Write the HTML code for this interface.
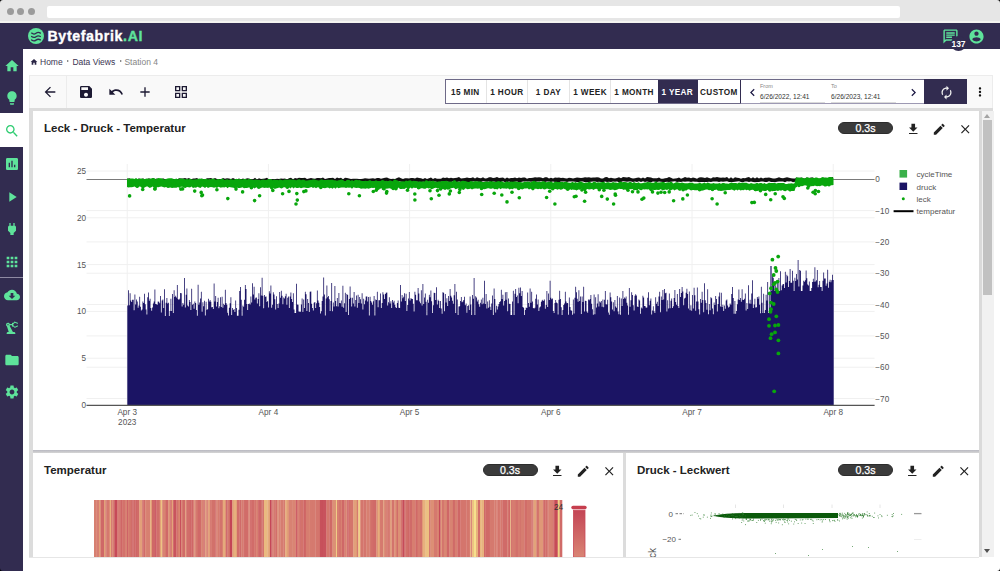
<!DOCTYPE html>
<html><head><meta charset="utf-8">
<style>
*{box-sizing:border-box;margin:0;padding:0}
html,body{width:1000px;height:571px;overflow:hidden;background:#fff;font-family:"Liberation Sans",sans-serif;}
.abs{position:absolute}
svg{display:block}
.chrome{left:0;top:0;width:1000px;height:21px;background:#e6e6e6}
.chromeline{left:0;top:21px;width:1000px;height:2px;background:#f4f4f0}
.dot{width:7px;height:7px;border-radius:50%;background:#9b9b9b;top:7.5px}
.addr{left:47px;top:6px;width:853px;height:12px;background:#fff;border-radius:2px}
.hdr{left:0;top:23px;width:1000px;height:26px;background:#322c50}
.side{left:0;top:49px;width:23px;height:522px;background:#322c50}
.logo{left:47.5px;top:26px;font-weight:bold;font-size:14.2px;letter-spacing:0.62px;color:#fff;line-height:20px;white-space:nowrap;-webkit-text-stroke:0.35px #fff}
.logo span{color:#5ee39b;-webkit-text-stroke:0.35px #5ee39b}
.sico{left:4px;width:15px;height:15px}
.bc{top:57px;font-size:8.5px;line-height:10px;color:#3a3552;white-space:nowrap}
.tb{left:29px;top:75px;width:964px;height:33px;background:#f9f9f9;border:1px solid #ececec;border-bottom:none}
.tbico{width:14px;height:14px;top:85px}
.tgrp{left:445px;top:79px;height:25px;border:1px solid #6e6a88;display:flex;background:#fff}
.tbtn{height:23px;font-size:8.2px;font-weight:bold;color:#222;line-height:23px;text-align:center;border-right:1px solid #e4e4e4;letter-spacing:0.38px}
.gray{left:29px;top:108px;width:950px;height:449px;background:#dcdcdc}
.card{background:#fff}
.ttl{font-size:11.5px;font-weight:bold;color:#222;line-height:14px;white-space:nowrap}
.pill{-webkit-text-stroke:0.25px #fff;width:55px;height:12px;border-radius:6px;background:#3b3b3b;border:1px solid #2c2c2c;color:#fff;font-size:10.6px;line-height:11px;text-align:center}
.cico{width:13px;height:13px}
</style></head><body>
<!-- browser chrome -->
<div class="abs chrome"></div>
<div class="abs chromeline"></div>
<div class="abs dot" style="left:6.5px"></div>
<div class="abs dot" style="left:17px"></div>
<div class="abs dot" style="left:27.5px"></div>
<div class="abs addr"></div>
<!-- header -->
<div class="abs hdr"></div>
<svg class="abs" style="left:26px;top:26px" width="20" height="20" viewBox="0 0 20 20">
<circle cx="10" cy="10" r="8" fill="#5ee39b"/>
<path d="M5.6 7.1q2.2 1.8 4.4 0.2t4.4 -0.2M5.6 10.5q2.2 1.8 4.4 0.2t4.4 -0.2M5.6 13.9q2.2 1.8 4.4 0.2t4.4 -0.2" stroke="#322c50" stroke-width="1.3" fill="none" stroke-linecap="round"/>
</svg>
<div class="abs logo">Bytefabrik<span>.AI</span></div>
<!-- header right icons -->
<svg class="abs" style="left:942px;top:28px" width="17" height="17" viewBox="0 0 24 24"><path fill="#5ee39b" d="M20 2H4c-1.1 0-2 .9-2 2v18l4-4h14c1.1 0 2-.9 2-2V4c0-1.1-.9-2-2-2zm0 14H5.17L4 17.17V4h16v12zM6 12h8v2H6zm0-3h12v2H6zm0-3h12v2H6z"/></svg>
<div class="abs" style="left:950.8px;top:36.3px;width:15px;height:14.5px;border-radius:50%;background:#322c50"></div><div class="abs" style="left:948px;top:37.5px;width:21px;color:#fff;font-size:8.5px;font-weight:bold;line-height:12px;text-align:center">137</div>
<svg class="abs" style="left:967.5px;top:28px" width="17" height="17" viewBox="0 0 24 24"><path fill="#5ee39b" d="M12 2C6.48 2 2 6.48 2 12s4.48 10 10 10 10-4.48 10-10S17.52 2 12 2zm0 3c1.66 0 3 1.34 3 3s-1.34 3-3 3-3-1.34-3-3 1.34-3 3-3zm0 14.2c-2.5 0-4.710-1.28-6-3.22.03-1.99 4-3.08 6-3.08 1.99 0 5.970 1.09 6 3.08-1.29 1.94-3.5 3.22-6 3.22z"/></svg>
<!-- sidebar -->
<div class="abs side"></div>
<div class="abs" style="left:0;top:113px;width:23px;height:34px;background:#fff"></div>
<div class="abs" style="left:0;top:276.5px;width:23px;height:1px;background:#8f8aa3"></div>
<svg class="abs" style="left:3.50px;top:58.00px" width="16" height="16" viewBox="0 0 24 24"><path fill="#5ee39b" d="M10 20v-6h4v6h5v-8h3L12 3 2 12h3v8z"/></svg>
<svg class="abs" style="left:3.50px;top:89.50px" width="16" height="16" viewBox="0 0 24 24"><path fill="#5ee39b" d="M9 21c0 .55.45 1 1 1h4c.55 0 1-.45 1-1v-1H9v1zm3-19C8.14 2 5 5.14 5 9c0 2.38 1.19 4.47 3 5.74V17c0 .55.45 1 1 1h6c.55 0 1-.45 1-1v-2.26c1.81-1.27 3-3.360 3-5.74 0-3.86-3.14-7-7-7z"/></svg>
<svg class="abs" style="left:3.50px;top:123.00px" width="16" height="16" viewBox="0 0 24 24"><path fill="#2ecc71" d="M15.5 14h-.79l-.28-.27C15.41 12.59 16 11.11 16 9.5 16 5.91 13.09 3 9.5 3S3 5.91 3 9.5 5.91 16 9.5 16c1.61 0 3.09-.59 4.23-1.57l.27.28v.79l5 4.99L20.49 19l-4.99-5zm-6 0C7.01 14 5 11.99 5 9.5S7.01 5 9.5 5 14 7.01 14 9.5 11.99 14 9.5 14z"/></svg>
<svg class="abs" style="left:3.50px;top:155.50px" width="16" height="16" viewBox="0 0 24 24"><path fill="#5ee39b" d="M19 3H5c-1.1 0-2 .9-2 2v14c0 1.1.9 2 2 2h14c1.1 0 2-.9 2-2V5c0-1.1-.9-2-2-2zM9 17H7v-7h2v7zm4 0h-2V7h2v10zm4 0h-2v-4h2v4z"/></svg>
<svg class="abs" style="left:3.50px;top:188.50px" width="16" height="16" viewBox="0 0 24 24"><path fill="#5ee39b" d="M8 5v14l11-7z"/></svg>
<svg class="abs" style="left:3.50px;top:220.50px" width="16" height="16" viewBox="0 0 24 24"><path fill="#5ee39b" d="M16.01 7L16 3h-2v4h-4V3H8v4h-.01C7 6.99 6 7.99 6 8.99v5.49L9.5 18v3h5v-3l3.5-3.51v-5.5c0-1-1-2-1.99-1.99z"/></svg>
<svg class="abs" style="left:3.50px;top:253.50px" width="16" height="16" viewBox="0 0 24 24"><path fill="#5ee39b" d="M4 8h4V4H4v4zm6 12h4v-4h-4v4zm-6 0h4v-4H4v4zm0-6h4v-4H4v4zm6 0h4v-4h-4v4zm6-10v4h4V4h-4zm-6 4h4V4h-4v4zm6 6h4v-4h-4v4zm0 6h4v-4h-4v4z"/></svg>
<svg class="abs" style="left:3.50px;top:287.00px" width="16" height="16" viewBox="0 0 24 24"><path fill="#5ee39b" d="M19.35 10.04C18.67 6.59 15.64 4 12 4 9.11 4 6.6 5.64 5.35 8.04 2.34 8.36 0 10.91 0 14c0 3.31 2.69 6 6 6h13c2.76 0 5-2.24 5-5 0-2.64-2.05-4.78-4.65-4.96zM17 13l-5 5-5-5h3V9h4v4h3z"/></svg>
<svg class="abs" style="left:3.50px;top:319.50px" width="16" height="16" viewBox="0 0 24 24"><path fill="#5ee39b" d="M19.93 8.35l-3.6 1.68L14 7.7V6.3l2.33-2.33 3.6 1.68c.38.18.82.01 1-.36.18-.38.01-.82-.36-1l-3.92-1.83c-.38-.18-.83-.1-1.13.2L13.78 4.4c-.18-.24-.46-.4-.78-.4-.55 0-1 .45-1 1v1H8.82C8.4 4.84 7.3 4 6 4 4.34 4 3 5.34 3 7c0 1.1.6 2.05 1.48 2.58L7.08 18H6c-1.1 0-2 .9-2 2v1h13v-1c0-1.1-.9-2-2-2h-1.62L8.41 8.77c.17-.24.31-.49.41-.77H12v1c0 .55.45 1 1 1 .32 0 .6-.16.78-.4l1.74 1.74c.3.3.75.38 1.13.2l3.92-1.83c.38-.18.54-.62.36-1-.18-.37-.62-.54-1-.36zM6 8c-.55 0-1-.45-1-1s.45-1 1-1 1 .45 1 1-.45 1-1 1z"/></svg>
<svg class="abs" style="left:3.50px;top:351.50px" width="16" height="16" viewBox="0 0 24 24"><path fill="#5ee39b" d="M10 4H4c-1.1 0-1.99.9-1.99 2L2 18c0 1.1.9 2 2 2h16c1.1 0 2-.9 2-2V8c0-1.1-.9-2-2-2h-8l-2-2z"/></svg>
<svg class="abs" style="left:3.50px;top:384.00px" width="16" height="16" viewBox="0 0 24 24"><path fill="#5ee39b" d="M19.14 12.94c.04-.3.06-.61.06-.94 0-.32-.02-.64-.07-.94l2.03-1.58c.18-.14.23-.41.12-.61l-1.92-3.32c-.12-.22-.37-.29-.59-.22l-2.39.96c-.5-.38-1.03-.7-1.62-.94l-.36-2.54c-.04-.24-.24-.41-.48-.41h-3.84c-.24 0-.43.17-.47.41l-.36 2.54c-.59.24-1.13.57-1.62.94l-2.39-.96c-.22-.08-.47 0-.59.22L2.74 8.87c-.12.21-.08.47.12.61l2.03 1.58c-.05.3-.09.63-.09.94s.02.64.07.94l-2.03 1.58c-.18.14-.23.41-.12.61l1.92 3.32c.12.22.37.29.59.22l2.390-.96c.5.38 1.03.7 1.62.94l.36 2.54c.05.24.24.41.48.41h3.84c.24 0 .44-.17.47-.41l.36-2.54c.59-.24 1.13-.56 1.62-.94l2.39.96c.22.08.47 0 .59-.22l1.92-3.32c.12-.22.07-.47-.12-.61l-2.01-1.58zM12 15.6c-1.98 0-3.6-1.62-3.6-3.6s1.62-3.6 3.6-3.6 3.6 1.62 3.6 3.6-1.62 3.6-3.6 3.6z"/></svg>

<!-- breadcrumb -->
<svg class="abs" style="left:29.5px;top:57.5px" width="8" height="8" viewBox="0 0 24 24"><path fill="#2a2545" d="M10 20v-6h4v6h5v-8h3L12 3 2 12h3v8z"/></svg>
<div class="abs bc" style="left:40px">Home</div>
<div class="abs" style="left:67px;top:60.3px;width:0;height:0;border-left:2.5px solid #666;border-top:1.7px solid transparent;border-bottom:1.7px solid transparent"></div>
<div class="abs bc" style="left:72.4px">Data Views</div>
<div class="abs" style="left:119.5px;top:60.3px;width:0;height:0;border-left:2.5px solid #666;border-top:1.7px solid transparent;border-bottom:1.7px solid transparent"></div>
<div class="abs bc" style="left:124.4px;color:#858585">Station 4</div>
<!-- toolbar -->
<div class="abs tb"></div>
<div class="abs" style="left:66px;top:76px;width:1px;height:32px;background:#ececec"></div>
<svg class="abs" style="left:41.50px;top:84.00px" width="16" height="16" viewBox="0 0 24 24"><path fill="#1d1a33" d="M20 11H7.83l5.59-5.59L12 4l-8 8 8 8 1.41-1.41L7.83 13H20v-2z"/></svg>
<svg class="abs" style="left:78.00px;top:84.00px" width="16" height="16" viewBox="0 0 24 24"><path fill="#1d1a33" d="M17 3H5c-1.11 0-2 .9-2 2v14c0 1.1.89 2 2 2h14c1.1 0 2-.9 2-2V7l-4-4zm-5 16c-1.66 0-3-1.34-3-3s1.34-3 3-3 3 1.34 3 3-1.34 3-3 3zm3-10H5V5h10v4z"/></svg>
<svg class="abs" style="left:107.70px;top:84.00px" width="16" height="16" viewBox="0 0 24 24"><path fill="#1d1a33" d="M12.5 8c-2.65 0-5.05.99-6.9 2.6L2 7v9h9l-3.62-3.62c1.39-1.16 3.16-1.88 5.12-1.88 3.54 0 6.55 2.31 7.6 5.5l2.37-.78C21.08 11.030 17.15 8 12.5 8z"/></svg>
<svg class="abs" style="left:136.80px;top:84.00px" width="16" height="16" viewBox="0 0 24 24"><path fill="#1d1a33" d="M19 13h-6v6h-2v-6H5v-2h6V5h2v6h6v2z"/></svg>
<svg class="abs" style="left:172.70px;top:84.00px" width="16" height="16" viewBox="0 0 24 24"><path fill="#1d1a33" d="M3 3v8h8V3H3zm6 6H5V5h4v4zm-6 4v8h8v-8H3zm6 6H5v-4h4v4zm4-16v8h8V3h-8zm6 6h-4V5h4v4zm-6 4v8h8v-8h-8zm6 6h-4v-4h4v4z"/></svg>
<div class="abs" style="left:445px;top:79.3px;width:297px;height:25px;border:1.2px solid #6e6a88;background:#fff"></div><div class="abs tbtn" style="left:445.0px;width:41.6px;top:80.3px;border-right:1px solid #e4e4e4;line-height:23px"><span style="position:relative;top:0.8px">15 MIN</span></div><div class="abs tbtn" style="left:486.6px;width:41.6px;top:80.3px;border-right:1px solid #e4e4e4;line-height:23px"><span style="position:relative;top:0.8px">1 HOUR</span></div><div class="abs tbtn" style="left:528.2px;width:41.6px;top:80.3px;border-right:1px solid #e4e4e4;line-height:23px"><span style="position:relative;top:0.8px">1 DAY</span></div><div class="abs tbtn" style="left:569.8px;width:41.6px;top:80.3px;border-right:1px solid #e4e4e4;line-height:23px"><span style="position:relative;top:0.8px">1 WEEK</span></div><div class="abs tbtn" style="left:611.4px;width:46.4px;top:80.3px;border-right:1px solid transparent;line-height:23px"><span style="position:relative;top:0.8px">1 MONTH</span></div><div class="abs tbtn" style="left:657.8px;width:40.0px;top:80.3px;background:#322c50;color:#fff;border-right:1px solid transparent;line-height:23px"><span style="position:relative;top:0.8px">1 YEAR</span></div><div class="abs tbtn" style="left:697.8px;width:43.2px;top:80.3px;border-right:1px solid #322c50;line-height:23px"><span style="position:relative;top:0.8px">CUSTOM</span></div>
<div class="abs" style="left:741px;top:79.3px;width:184px;height:25px;border-top:1.2px solid #6e6a88;border-bottom:1.6px solid #9d99b3;background:#fff"></div>
<svg class="abs" style="left:745.30px;top:84.80px" width="15" height="15" viewBox="0 0 24 24"><path fill="#1d1a45" d="M15.41 7.41L14 6l-6 6 6 6 1.41-1.41L10.83 12z"/></svg>
<svg class="abs" style="left:905.50px;top:84.80px" width="15" height="15" viewBox="0 0 24 24"><path fill="#1d1a45" d="M10 6L8.59 7.41 13.17 12l-4.58 4.59L10 18l6-6z"/></svg>
<div class="abs" style="left:760px;top:83px;font-size:5.5px;color:#888;line-height:6px">From</div>
<div class="abs" style="left:831px;top:83px;font-size:5.5px;color:#888;line-height:6px">To</div>
<div class="abs" style="left:760px;top:91.5px;font-size:6.6px;color:#333;line-height:9px;white-space:nowrap">6/26/2022, 12:41</div>
<div class="abs" style="left:831px;top:91.5px;font-size:6.6px;color:#333;line-height:9px;white-space:nowrap">6/26/2023, 12:41</div>
<div class="abs" style="left:760px;top:101.5px;width:65px;height:1.5px;background:#dadada"></div>
<div class="abs" style="left:831px;top:101.5px;width:65px;height:1.5px;background:#dadada"></div>
<div class="abs" style="left:924.2px;top:79.2px;width:43px;height:24.8px;background:#322c50"></div>
<svg class="abs" style="left:938.50px;top:84.50px" width="15" height="15" viewBox="0 0 24 24"><path fill="#f0f0f0" d="M12 6v3l4-4-4-4v3c-4.42 0-8 3.58-8 8 0 1.57.46 3.03 1.24 4.26L6.7 14.8c-.45-.83-.7-1.79-.7-2.8 0-3.31 2.69-6 6-6zm6.76 1.74L17.3 9.2c.44.84.7 1.79.7 2.8 0 3.31-2.69 6-6 6v-3l-4 4 4 4v-3c4.42 0 8-3.58 8-8 0-1.57-.46-3.03-1.24-4.26z"/></svg>
<svg class="abs" style="left:973.00px;top:85.00px" width="14" height="14" viewBox="0 0 24 24"><path fill="#111" d="M12 8c1.1 0 2-.9 2-2s-.9-2-2-2-2 .9-2 2 .9 2 2 2zm0 2c-1.1 0-2 .9-2 2s.9 2 2 2 2-.9 2-2-.9-2-2-2zm0 6c-1.1 0-2 .9-2 2s.9 2 2 2 2-.9 2-2-.9-2-2-2z"/></svg>

<!-- content gray -->
<div class="abs gray"></div>
<div class="abs card" style="left:33px;top:111px;width:946px;height:338.8px"></div>
<div class="abs" style="left:33px;top:449.8px;width:946px;height:3.2px;background:linear-gradient(#b9b9c1,#d5d5d5)"></div>
<div class="abs card" style="left:33px;top:453px;width:589.8px;height:104px"></div>
<div class="abs card" style="left:626.2px;top:453px;width:352.8px;height:104px"></div>
<div class="abs ttl" style="left:44px;top:121px">Leck - Druck - Temperatur</div>
<div class="abs ttl" style="left:44px;top:463px">Temperatur</div>
<div class="abs ttl" style="left:637px;top:463px">Druck - Leckwert</div>
<div class="abs pill" style="left:838px;top:122px">0.3s</div>
<svg class="abs" style="left:905.75px;top:122.25px" width="14.5" height="14.5" viewBox="0 0 24 24"><path fill="#222" d="M19 9h-4V3H9v6H5l7 7 7-7zM5 18v2h14v-2H5z"/></svg>
<svg class="abs" style="left:931.75px;top:122.25px" width="14.5" height="14.5" viewBox="0 0 24 24"><path fill="#222" d="M3 17.25V21h3.75L17.81 9.94l-3.75-3.75L3 17.25zM20.710 7.04c.39-.39.39-1.02 0-1.41l-2.34-2.34c-.39-.39-1.02-.39-1.41 0l-1.83 1.83 3.75 3.75 1.83-1.83z"/></svg>
<svg class="abs" style="left:957.75px;top:122.25px" width="14.5" height="14.5" viewBox="0 0 24 24"><path fill="#222" d="M19 6.41L17.59 5 12 10.59 6.41 5 5 6.41 10.59 12 5 17.59 6.41 19 12 13.41 17.59 19 19 17.59 13.410 12z"/></svg>
<div class="abs pill" style="left:482.5px;top:464px">0.3s</div>
<svg class="abs" style="left:549.75px;top:464.25px" width="14.5" height="14.5" viewBox="0 0 24 24"><path fill="#222" d="M19 9h-4V3H9v6H5l7 7 7-7zM5 18v2h14v-2H5z"/></svg>
<svg class="abs" style="left:575.75px;top:464.25px" width="14.5" height="14.5" viewBox="0 0 24 24"><path fill="#222" d="M3 17.25V21h3.75L17.81 9.94l-3.75-3.75L3 17.25zM20.710 7.04c.39-.39.39-1.02 0-1.41l-2.34-2.34c-.39-.39-1.02-.39-1.41 0l-1.83 1.83 3.75 3.75 1.83-1.83z"/></svg>
<svg class="abs" style="left:601.75px;top:464.25px" width="14.5" height="14.5" viewBox="0 0 24 24"><path fill="#222" d="M19 6.41L17.59 5 12 10.59 6.41 5 5 6.41 10.59 12 5 17.59 6.41 19 12 13.41 17.59 19 19 17.59 13.410 12z"/></svg>
<div class="abs pill" style="left:838px;top:464px">0.3s</div>
<svg class="abs" style="left:904.75px;top:464.25px" width="14.5" height="14.5" viewBox="0 0 24 24"><path fill="#222" d="M19 9h-4V3H9v6H5l7 7 7-7zM5 18v2h14v-2H5z"/></svg>
<svg class="abs" style="left:930.75px;top:464.25px" width="14.5" height="14.5" viewBox="0 0 24 24"><path fill="#222" d="M3 17.25V21h3.75L17.81 9.94l-3.75-3.75L3 17.25zM20.710 7.04c.39-.39.39-1.02 0-1.41l-2.34-2.34c-.39-.39-1.02-.39-1.41 0l-1.83 1.83 3.75 3.75 1.83-1.83z"/></svg>
<svg class="abs" style="left:956.75px;top:464.25px" width="14.5" height="14.5" viewBox="0 0 24 24"><path fill="#222" d="M19 6.41L17.59 5 12 10.59 6.41 5 5 6.41 10.59 12 5 17.59 6.41 19 12 13.41 17.59 19 19 17.59 13.410 12z"/></svg>
<svg class="abs" style="left:0;top:0" width="1000" height="460" viewBox="0 0 1000 460"><path d="M86.5 358.2H874.6M86.5 311.4H874.6M86.5 264.6H874.6M86.5 217.8H874.6M86.5 171.0H874.6M86.5 210.6H874.6M86.5 241.9H874.6M86.5 273.2H874.6M86.5 304.5H874.6M86.5 335.9H874.6M86.5 367.2H874.6M86.5 398.5H874.6M127.2 164V405M268.4 164V405M409.6 164V405M550.8 164V405M692.0 164V405M833.2 164V405" stroke="#f0f0f0" stroke-width="1" fill="none"/><path d="M86.5 179.5H874.6" stroke="#7a7a7a" stroke-width="1" fill="none"/><path d="M127.30 405V305.4h0.8V405zM128.10 405V290.3h0.8V405zM128.90 405V305.2h0.8V405zM129.70 405V293.2h0.8V405zM130.50 405V300.5h0.8V405zM131.30 405V302.1h0.8V405zM132.10 405V299.7h0.8V405zM132.90 405V299.7h0.8V405zM133.70 405V310.2h0.8V405zM134.50 405V294.4h0.8V405zM135.30 405V304.5h0.8V405zM136.10 405V299.4h0.8V405zM136.90 405V301.6h0.8V405zM137.70 405V307.8h0.8V405zM138.50 405V305.4h0.8V405zM139.30 405V296.7h0.8V405zM140.10 405V306.8h0.8V405zM140.90 405V310.6h0.8V405zM141.70 405V309.5h0.8V405zM142.50 405V301.6h0.8V405zM143.30 405V303.1h0.8V405zM144.10 405V293.7h0.8V405zM144.90 405V304.2h0.8V405zM145.70 405V309.6h0.8V405zM146.50 405V314.4h0.8V405zM147.30 405V297.2h0.8V405zM148.10 405V292.6h0.8V405zM148.90 405V300.7h0.8V405zM149.70 405V298.8h0.8V405zM150.50 405V308h0.8V405zM151.30 405V310.7h0.8V405zM152.10 405V307.4h0.8V405zM152.90 405V303.4h0.8V405zM153.70 405V301.6h0.8V405zM154.50 405V289.5h0.8V405zM155.30 405V304h0.8V405zM156.10 405V304.2h0.8V405zM156.90 405V304.8h0.8V405zM157.70 405V301.5h0.8V405zM158.50 405V301.7h0.8V405zM159.30 405V303.3h0.8V405zM160.10 405V295.9h0.8V405zM160.90 405V312.4h0.8V405zM161.70 405V300.4h0.8V405zM162.50 405V299.4h0.8V405zM163.30 405V308h0.8V405zM164.10 405V289.3h0.8V405zM164.90 405V315.9h0.8V405zM165.70 405V302.8h0.8V405zM166.50 405V298h0.8V405zM167.30 405V303.4h0.8V405zM168.10 405V302.7h0.8V405zM168.90 405V315.9h0.8V405zM169.70 405V310.9h0.8V405zM170.50 405V298.7h0.8V405zM171.30 405V311h0.8V405zM172.10 405V293.9h0.8V405zM172.90 405V312.9h0.8V405zM173.70 405V290.2h0.8V405zM174.50 405V296.9h0.8V405zM175.30 405V295.8h0.8V405zM176.10 405V297.5h0.8V405zM176.90 405V284.9h0.8V405zM177.70 405V299.1h0.8V405zM178.50 405V300h0.8V405zM179.30 405V298.8h0.8V405zM180.10 405V292.9h0.8V405zM180.90 405V293.2h0.8V405zM181.70 405V306.5h0.8V405zM182.50 405V303h0.8V405zM183.30 405V304.7h0.8V405zM184.10 405V277.9h0.8V405zM184.90 405V307.5h0.8V405zM185.70 405V294.8h0.8V405zM186.50 405V288.5h0.8V405zM187.30 405V305.4h0.8V405zM188.10 405V306.4h0.8V405zM188.90 405V300h0.8V405zM189.70 405V302.1h0.8V405zM190.50 405V309.9h0.8V405zM191.30 405V288.7h0.8V405zM192.10 405V304.7h0.8V405zM192.90 405V303.7h0.8V405zM193.70 405V308.7h0.8V405zM194.50 405V301.6h0.8V405zM195.30 405V303h0.8V405zM196.10 405V310h0.8V405zM196.90 405V315.8h0.8V405zM197.70 405V284.7h0.8V405zM198.50 405V304.7h0.8V405zM199.30 405V302.6h0.8V405zM200.10 405V298.4h0.8V405zM200.90 405V291.7h0.8V405zM201.70 405V311.7h0.8V405zM202.50 405V302.3h0.8V405zM203.30 405V306.3h0.8V405zM204.10 405V300.8h0.8V405zM204.90 405V315.5h0.8V405zM205.70 405V301.7h0.8V405zM206.50 405V309.8h0.8V405zM207.30 405V309.3h0.8V405zM208.10 405V298.7h0.8V405zM208.90 405V301.4h0.8V405zM209.70 405V299.9h0.8V405zM210.50 405V301.8h0.8V405zM211.30 405V307.2h0.8V405zM212.10 405V307.1h0.8V405zM212.90 405V309.1h0.8V405zM213.70 405V283.4h0.8V405zM214.50 405V301.5h0.8V405zM215.30 405V296h0.8V405zM216.10 405V306.5h0.8V405zM216.90 405V301.9h0.8V405zM217.70 405V297.7h0.8V405zM218.50 405V308.2h0.8V405zM219.30 405V306.3h0.8V405zM220.10 405V297.3h0.8V405zM220.90 405V307h0.8V405zM221.70 405V296.8h0.8V405zM222.50 405V307.7h0.8V405zM223.30 405V303.8h0.8V405zM224.10 405V305.1h0.8V405zM224.90 405V289.8h0.8V405zM225.70 405V302.9h0.8V405zM226.50 405V304.7h0.8V405zM227.30 405V312.7h0.8V405zM228.10 405V315.6h0.8V405zM228.90 405V307.7h0.8V405zM229.70 405V303.2h0.8V405zM230.50 405V297.2h0.8V405zM231.30 405V315h0.8V405zM232.10 405V308h0.8V405zM232.90 405V310h0.8V405zM233.70 405V309h0.8V405zM234.50 405V312.1h0.8V405zM235.30 405V300.5h0.8V405zM236.10 405V308h0.8V405zM236.90 405V315.7h0.8V405zM237.70 405V315.7h0.8V405zM238.50 405V309.8h0.8V405zM239.30 405V290.9h0.8V405zM240.10 405V286.9h0.8V405zM240.90 405V299.8h0.8V405zM241.70 405V315.7h0.8V405zM242.50 405V305.4h0.8V405zM243.30 405V306.7h0.8V405zM244.10 405V299.7h0.8V405zM244.90 405V285h0.8V405zM245.70 405V289h0.8V405zM246.50 405V304.1h0.8V405zM247.30 405V310h0.8V405zM248.10 405V303.9h0.8V405zM248.90 405V303.4h0.8V405zM249.70 405V304.6h0.8V405zM250.50 405V296.5h0.8V405zM251.30 405V302.4h0.8V405zM252.10 405V283.2h0.8V405zM252.90 405V294.6h0.8V405zM253.70 405V286.7h0.8V405zM254.50 405V299.6h0.8V405zM255.30 405V297.8h0.8V405zM256.10 405V297.5h0.8V405zM256.90 405V303.4h0.8V405zM257.70 405V298.9h0.8V405zM258.50 405V293.3h0.8V405zM259.30 405V306.2h0.8V405zM260.10 405V287.2h0.8V405zM260.90 405V295.4h0.8V405zM261.70 405V277.7h0.8V405zM262.50 405V295.7h0.8V405zM263.30 405V308.2h0.8V405zM264.10 405V295.1h0.8V405zM264.90 405V296.8h0.8V405zM265.70 405V296.5h0.8V405zM266.50 405V301.9h0.8V405zM267.30 405V301.1h0.8V405zM268.10 405V307.4h0.8V405zM268.90 405V291.2h0.8V405zM269.70 405V293.6h0.8V405zM270.50 405V285.6h0.8V405zM271.30 405V307.7h0.8V405zM272.10 405V304.7h0.8V405zM272.90 405V292.2h0.8V405zM273.70 405V294.5h0.8V405zM274.50 405V299.3h0.8V405zM275.30 405V309.6h0.8V405zM276.10 405V296.3h0.8V405zM276.90 405V303.9h0.8V405zM277.70 405V308.1h0.8V405zM278.50 405V303.6h0.8V405zM279.30 405V292h0.8V405zM280.10 405V297.8h0.8V405zM280.90 405V290.7h0.8V405zM281.70 405V295.8h0.8V405zM282.50 405V304.2h0.8V405zM283.30 405V297.6h0.8V405zM284.10 405V298.6h0.8V405zM284.90 405V296.3h0.8V405zM285.70 405V293.8h0.8V405zM286.50 405V304.7h0.8V405zM287.30 405V297.8h0.8V405zM288.10 405V296.5h0.8V405zM288.90 405V308.1h0.8V405zM289.70 405V296.5h0.8V405zM290.50 405V292.4h0.8V405zM291.30 405V299h0.8V405zM292.10 405V302h0.8V405zM292.90 405V293.2h0.8V405zM293.70 405V309.6h0.8V405zM294.50 405V313h0.8V405zM295.30 405V313h0.8V405zM296.10 405V283.8h0.8V405zM296.90 405V304.5h0.8V405zM297.70 405V304.8h0.8V405zM298.50 405V311.6h0.8V405zM299.30 405V311.8h0.8V405zM300.10 405V311.8h0.8V405zM300.90 405V304.4h0.8V405zM301.70 405V298.5h0.8V405zM302.50 405V311.9h0.8V405zM303.30 405V299.6h0.8V405zM304.10 405V308.1h0.8V405zM304.90 405V291.8h0.8V405zM305.70 405V294.3h0.8V405zM306.50 405V311h0.8V405zM307.30 405V299.1h0.8V405zM308.10 405V303.1h0.8V405zM308.90 405V311.9h0.8V405zM309.70 405V291.8h0.8V405zM310.50 405V291.4h0.8V405zM311.30 405V303.7h0.8V405zM312.10 405V308.1h0.8V405zM312.90 405V310.4h0.8V405zM313.70 405V302.7h0.8V405zM314.50 405V301.9h0.8V405zM315.30 405V307.9h0.8V405zM316.10 405V303.3h0.8V405zM316.90 405V290.6h0.8V405zM317.70 405V300.4h0.8V405zM318.50 405V302.8h0.8V405zM319.30 405V307h0.8V405zM320.10 405V313.5h0.8V405zM320.90 405V311.2h0.8V405zM321.70 405V301.1h0.8V405zM322.50 405V296.5h0.8V405zM323.30 405V277.5h0.8V405zM324.10 405V294.6h0.8V405zM324.90 405V315.5h0.8V405zM325.70 405V298.5h0.8V405zM326.50 405V285.5h0.8V405zM327.30 405V297.2h0.8V405zM328.10 405V295.9h0.8V405zM328.90 405V299.2h0.8V405zM329.70 405V311.1h0.8V405zM330.50 405V301.1h0.8V405zM331.30 405V283h0.8V405zM332.10 405V311.2h0.8V405zM332.90 405V302.5h0.8V405zM333.70 405V306.6h0.8V405zM334.50 405V286h0.8V405zM335.30 405V300.9h0.8V405zM336.10 405V306.2h0.8V405zM336.90 405V297.9h0.8V405zM337.70 405V306.5h0.8V405zM338.50 405V292.9h0.8V405zM339.30 405V303h0.8V405zM340.10 405V303.3h0.8V405zM340.90 405V300.6h0.8V405zM341.70 405V306.8h0.8V405zM342.50 405V285.8h0.8V405zM343.30 405V307.8h0.8V405zM344.10 405V303.3h0.8V405zM344.90 405V292.7h0.8V405zM345.70 405V312h0.8V405zM346.50 405V294.1h0.8V405zM347.30 405V295h0.8V405zM348.10 405V314.9h0.8V405zM348.90 405V299.1h0.8V405zM349.70 405V286.6h0.8V405zM350.50 405V297.7h0.8V405zM351.30 405V306.4h0.8V405zM352.10 405V297.7h0.8V405zM352.90 405V303.6h0.8V405zM353.70 405V292h0.8V405zM354.50 405V306.5h0.8V405zM355.30 405V300.1h0.8V405zM356.10 405V295.6h0.8V405zM356.90 405V307.8h0.8V405zM357.70 405V294.7h0.8V405zM358.50 405V303.1h0.8V405zM359.30 405V297.1h0.8V405zM360.10 405V299.2h0.8V405zM360.90 405V303.4h0.8V405zM361.70 405V293.2h0.8V405zM362.50 405V309.5h0.8V405zM363.30 405V298.8h0.8V405zM364.10 405V304.3h0.8V405zM364.90 405V300.6h0.8V405zM365.70 405V296.6h0.8V405zM366.50 405V296.6h0.8V405zM367.30 405V301.6h0.8V405zM368.10 405V297h0.8V405zM368.90 405V315.4h0.8V405zM369.70 405V296.7h0.8V405zM370.50 405V301h0.8V405zM371.30 405V302.6h0.8V405zM372.10 405V304.8h0.8V405zM372.90 405V301.2h0.8V405zM373.70 405V296.1h0.8V405zM374.50 405V315.4h0.8V405zM375.30 405V299.5h0.8V405zM376.10 405V300.1h0.8V405zM376.90 405V291.7h0.8V405zM377.70 405V307.2h0.8V405zM378.50 405V300.2h0.8V405zM379.30 405V300.3h0.8V405zM380.10 405V293.4h0.8V405zM380.90 405V308h0.8V405zM381.70 405V303h0.8V405zM382.50 405V292.2h0.8V405zM383.30 405V294.6h0.8V405zM384.10 405V298.9h0.8V405zM384.90 405V294.1h0.8V405zM385.70 405V292.8h0.8V405zM386.50 405V292.4h0.8V405zM387.30 405V305.6h0.8V405zM388.10 405V302.3h0.8V405zM388.90 405V297.2h0.8V405zM389.70 405V303.4h0.8V405zM390.50 405V301.3h0.8V405zM391.30 405V307.9h0.8V405zM392.10 405V300h0.8V405zM392.90 405V302.5h0.8V405zM393.70 405V300.8h0.8V405zM394.50 405V304.8h0.8V405zM395.30 405V307.3h0.8V405zM396.10 405V307.9h0.8V405zM396.90 405V302.9h0.8V405zM397.70 405V300.5h0.8V405zM398.50 405V307.7h0.8V405zM399.30 405V307.9h0.8V405zM400.10 405V285h0.8V405zM400.90 405V301.5h0.8V405zM401.70 405V295.1h0.8V405zM402.50 405V298.2h0.8V405zM403.30 405V296.8h0.8V405zM404.10 405V293.3h0.8V405zM404.90 405V300.9h0.8V405zM405.70 405V293.7h0.8V405zM406.50 405V310.9h0.8V405zM407.30 405V305.1h0.8V405zM408.10 405V298.5h0.8V405zM408.90 405V291.9h0.8V405zM409.70 405V300.6h0.8V405zM410.50 405V298.2h0.8V405zM411.30 405V298.8h0.8V405zM412.10 405V299h0.8V405zM412.90 405V303.8h0.8V405zM413.70 405V311.4h0.8V405zM414.50 405V291.8h0.8V405zM415.30 405V294.7h0.8V405zM416.10 405V300.2h0.8V405zM416.90 405V300.2h0.8V405zM417.70 405V287.9h0.8V405zM418.50 405V293.5h0.8V405zM419.30 405V301.4h0.8V405zM420.10 405V303.3h0.8V405zM420.90 405V290.3h0.8V405zM421.70 405V305.4h0.8V405zM422.50 405V284h0.8V405zM423.30 405V304.1h0.8V405zM424.10 405V297.6h0.8V405zM424.90 405V293.5h0.8V405zM425.70 405V301.7h0.8V405zM426.50 405V315.2h0.8V405zM427.30 405V299.8h0.8V405zM428.10 405V302.8h0.8V405zM428.90 405V294.8h0.8V405zM429.70 405V297.2h0.8V405zM430.50 405V290.4h0.8V405zM431.30 405V301.2h0.8V405zM432.10 405V312.9h0.8V405zM432.90 405V305.2h0.8V405zM433.70 405V292.7h0.8V405zM434.50 405V293.1h0.8V405zM435.30 405V299.9h0.8V405zM436.10 405V287.3h0.8V405zM436.90 405V304.6h0.8V405zM437.70 405V299.8h0.8V405zM438.50 405V301h0.8V405zM439.30 405V307.9h0.8V405zM440.10 405V300.9h0.8V405zM440.90 405V308.4h0.8V405zM441.70 405V313.7h0.8V405zM442.50 405V292.3h0.8V405zM443.30 405V292.8h0.8V405zM444.10 405V311.2h0.8V405zM444.90 405V293.9h0.8V405zM445.70 405V302.5h0.8V405zM446.50 405V298.3h0.8V405zM447.30 405V306.1h0.8V405zM448.10 405V296h0.8V405zM448.90 405V301.1h0.8V405zM449.70 405V289.1h0.8V405zM450.50 405V295.8h0.8V405zM451.30 405V297.5h0.8V405zM452.10 405V300.8h0.8V405zM452.90 405V303.8h0.8V405zM453.70 405V295.2h0.8V405zM454.50 405V283.9h0.8V405zM455.30 405V313.1h0.8V405zM456.10 405V291.8h0.8V405zM456.90 405V299.5h0.8V405zM457.70 405V315.1h0.8V405zM458.50 405V306.5h0.8V405zM459.30 405V306.2h0.8V405zM460.10 405V301h0.8V405zM460.90 405V297.1h0.8V405zM461.70 405V302.3h0.8V405zM462.50 405V301.5h0.8V405zM463.30 405V300h0.8V405zM464.10 405V296.7h0.8V405zM464.90 405V305.2h0.8V405zM465.70 405V303.4h0.8V405zM466.50 405V312.8h0.8V405zM467.30 405V305.9h0.8V405zM468.10 405V305.2h0.8V405zM468.90 405V309.9h0.8V405zM469.70 405V296.4h0.8V405zM470.50 405V304.5h0.8V405zM471.30 405V315.1h0.8V405zM472.10 405V295.1h0.8V405zM472.90 405V298.7h0.8V405zM473.70 405V278.1h0.8V405zM474.50 405V314.9h0.8V405zM475.30 405V296.2h0.8V405zM476.10 405V297.4h0.8V405zM476.90 405V301.5h0.8V405zM477.70 405V299.8h0.8V405zM478.50 405V304.3h0.8V405zM479.30 405V306.8h0.8V405zM480.10 405V302.7h0.8V405zM480.90 405V299.4h0.8V405zM481.70 405V304.2h0.8V405zM482.50 405V297.7h0.8V405zM483.30 405V303.6h0.8V405zM484.10 405V280.8h0.8V405zM484.90 405V303.9h0.8V405zM485.70 405V294h0.8V405zM486.50 405V308.5h0.8V405zM487.30 405V301.4h0.8V405zM488.10 405V307.7h0.8V405zM488.90 405V300.3h0.8V405zM489.70 405V306.7h0.8V405zM490.50 405V309.9h0.8V405zM491.30 405V303.4h0.8V405zM492.10 405V295.4h0.8V405zM492.90 405V315h0.8V405zM493.70 405V288.6h0.8V405zM494.50 405V299.1h0.8V405zM495.30 405V312.6h0.8V405zM496.10 405V305.8h0.8V405zM496.90 405V309.4h0.8V405zM497.70 405V306.4h0.8V405zM498.50 405V304h0.8V405zM499.30 405V301.9h0.8V405zM500.10 405V301.3h0.8V405zM500.90 405V289.8h0.8V405zM501.70 405V298.9h0.8V405zM502.50 405V294.8h0.8V405zM503.30 405V305.5h0.8V405zM504.10 405V301.1h0.8V405zM504.90 405V292.2h0.8V405zM505.70 405V299.8h0.8V405zM506.50 405V291.9h0.8V405zM507.30 405V311.3h0.8V405zM508.10 405V298.6h0.8V405zM508.90 405V303.7h0.8V405zM509.70 405V304h0.8V405zM510.50 405V315h0.8V405zM511.30 405V315h0.8V405zM512.10 405V301.5h0.8V405zM512.90 405V290.8h0.8V405zM513.70 405V315h0.8V405zM514.50 405V293.8h0.8V405zM515.30 405V289.1h0.8V405zM516.10 405V297h0.8V405zM516.90 405V295.5h0.8V405zM517.70 405V303.2h0.8V405zM518.50 405V287.8h0.8V405zM519.30 405V293.2h0.8V405zM520.10 405V287.5h0.8V405zM520.90 405V296h0.8V405zM521.70 405V291h0.8V405zM522.50 405V307.1h0.8V405zM523.30 405V307.8h0.8V405zM524.10 405V315h0.8V405zM524.90 405V309.9h0.8V405zM525.70 405V307.6h0.8V405zM526.50 405V307.9h0.8V405zM527.30 405V292.6h0.8V405zM528.10 405V303h0.8V405zM528.90 405V306.8h0.8V405zM529.70 405V288.6h0.8V405zM530.50 405V302.7h0.8V405zM531.30 405V291.7h0.8V405zM532.10 405V301.5h0.8V405zM532.90 405V308h0.8V405zM533.70 405V308.4h0.8V405zM534.50 405V307.7h0.8V405zM535.30 405V298.8h0.8V405zM536.10 405V294.4h0.8V405zM536.90 405V304.6h0.8V405zM537.70 405V299.6h0.8V405zM538.50 405V311.1h0.8V405zM539.30 405V307.4h0.8V405zM540.10 405V306.4h0.8V405zM540.90 405V301.8h0.8V405zM541.70 405V300.4h0.8V405zM542.50 405V299.7h0.8V405zM543.30 405V300.9h0.8V405zM544.10 405V299.4h0.8V405zM544.90 405V308.8h0.8V405zM545.70 405V305.1h0.8V405zM546.50 405V291.1h0.8V405zM547.30 405V307.1h0.8V405zM548.10 405V293.5h0.8V405zM548.90 405V299.9h0.8V405zM549.70 405V280.7h0.8V405zM550.50 405V297.7h0.8V405zM551.30 405V299.3h0.8V405zM552.10 405V298.5h0.8V405zM552.90 405V311h0.8V405zM553.70 405V313.1h0.8V405zM554.50 405V303.1h0.8V405zM555.30 405V300.1h0.8V405zM556.10 405V302.6h0.8V405zM556.90 405V303.2h0.8V405zM557.70 405V314.4h0.8V405zM558.50 405V299.7h0.8V405zM559.30 405V290.7h0.8V405zM560.10 405V299h0.8V405zM560.90 405V307.3h0.8V405zM561.70 405V314.9h0.8V405zM562.50 405V309.9h0.8V405zM563.30 405V305h0.8V405zM564.10 405V303.4h0.8V405zM564.90 405V291.7h0.8V405zM565.70 405V301.4h0.8V405zM566.50 405V303.2h0.8V405zM567.30 405V303h0.8V405zM568.10 405V314.8h0.8V405zM568.90 405V297.5h0.8V405zM569.70 405V306.9h0.8V405zM570.50 405V310.2h0.8V405zM571.30 405V310.8h0.8V405zM572.10 405V314.8h0.8V405zM572.90 405V299.6h0.8V405zM573.70 405V313.5h0.8V405zM574.50 405V297.7h0.8V405zM575.30 405V286.7h0.8V405zM576.10 405V292.2h0.8V405zM576.90 405V298.8h0.8V405zM577.70 405V301.7h0.8V405zM578.50 405V290.3h0.8V405zM579.30 405V300.9h0.8V405zM580.10 405V296.4h0.8V405zM580.90 405V313.9h0.8V405zM581.70 405V296.6h0.8V405zM582.50 405V302.1h0.8V405zM583.30 405V286.8h0.8V405zM584.10 405V311.5h0.8V405zM584.90 405V300.8h0.8V405zM585.70 405V301h0.8V405zM586.50 405V311.6h0.8V405zM587.30 405V312.8h0.8V405zM588.10 405V299.5h0.8V405zM588.90 405V300.3h0.8V405zM589.70 405V299h0.8V405zM590.50 405V295.1h0.8V405zM591.30 405V303.8h0.8V405zM592.10 405V309.3h0.8V405zM592.90 405V314.8h0.8V405zM593.70 405V294.5h0.8V405zM594.50 405V314.2h0.8V405zM595.30 405V297.3h0.8V405zM596.10 405V307.4h0.8V405zM596.90 405V303.5h0.8V405zM597.70 405V294.3h0.8V405zM598.50 405V306.4h0.8V405zM599.30 405V301.6h0.8V405zM600.10 405V302.4h0.8V405zM600.90 405V300.9h0.8V405zM601.70 405V306.8h0.8V405zM602.50 405V299.4h0.8V405zM603.30 405V307.3h0.8V405zM604.10 405V299.7h0.8V405zM604.90 405V290.9h0.8V405zM605.70 405V304.3h0.8V405zM606.50 405V304.6h0.8V405zM607.30 405V299.8h0.8V405zM608.10 405V312.5h0.8V405zM608.90 405V314.7h0.8V405zM609.70 405V292.5h0.8V405zM610.50 405V297.2h0.8V405zM611.30 405V301.4h0.8V405zM612.10 405V309.6h0.8V405zM612.90 405V302.3h0.8V405zM613.70 405V311.2h0.8V405zM614.50 405V300h0.8V405zM615.30 405V306.4h0.8V405zM616.10 405V307.7h0.8V405zM616.90 405V296.1h0.8V405zM617.70 405V311.4h0.8V405zM618.50 405V314.2h0.8V405zM619.30 405V297.4h0.8V405zM620.10 405V314.7h0.8V405zM620.90 405V298.5h0.8V405zM621.70 405V305.9h0.8V405zM622.50 405V291.1h0.8V405zM623.30 405V299.1h0.8V405zM624.10 405V297.5h0.8V405zM624.90 405V298.6h0.8V405zM625.70 405V296.5h0.8V405zM626.50 405V302.7h0.8V405zM627.30 405V305.6h0.8V405zM628.10 405V314.7h0.8V405zM628.90 405V287.9h0.8V405zM629.70 405V306.7h0.8V405zM630.50 405V300.2h0.8V405zM631.30 405V292.2h0.8V405zM632.10 405V295h0.8V405zM632.90 405V305.3h0.8V405zM633.70 405V310.5h0.8V405zM634.50 405V295.8h0.8V405zM635.30 405V294.2h0.8V405zM636.10 405V295.5h0.8V405zM636.90 405V306.5h0.8V405zM637.70 405V306.9h0.8V405zM638.50 405V299.6h0.8V405zM639.30 405V300.4h0.8V405zM640.10 405V313.7h0.8V405zM640.90 405V307.4h0.8V405zM641.70 405V308.6h0.8V405zM642.50 405V295.8h0.8V405zM643.30 405V297.6h0.8V405zM644.10 405V306.1h0.8V405zM644.90 405V306.3h0.8V405zM645.70 405V307.7h0.8V405zM646.50 405V307.5h0.8V405zM647.30 405V297.7h0.8V405zM648.10 405V292.2h0.8V405zM648.90 405V305.2h0.8V405zM649.70 405V300.8h0.8V405zM650.50 405V298.6h0.8V405zM651.30 405V314.6h0.8V405zM652.10 405V310.5h0.8V405zM652.90 405V306.3h0.8V405zM653.70 405V311.2h0.8V405zM654.50 405V312.9h0.8V405zM655.30 405V297.2h0.8V405zM656.10 405V303.8h0.8V405zM656.90 405V301.8h0.8V405zM657.70 405V305.9h0.8V405zM658.50 405V296.5h0.8V405zM659.30 405V291.8h0.8V405zM660.10 405V312.3h0.8V405zM660.90 405V296.5h0.8V405zM661.70 405V300.1h0.8V405zM662.50 405V289.9h0.8V405zM663.30 405V299.5h0.8V405zM664.10 405V288.9h0.8V405zM664.90 405V293.2h0.8V405zM665.70 405V292.7h0.8V405zM666.50 405V311.5h0.8V405zM667.30 405V300.2h0.8V405zM668.10 405V308.5h0.8V405zM668.90 405V293.5h0.8V405zM669.70 405V308.2h0.8V405zM670.50 405V300.8h0.8V405zM671.30 405V298.5h0.8V405zM672.10 405V308.1h0.8V405zM672.90 405V306.2h0.8V405zM673.70 405V298h0.8V405zM674.50 405V290.1h0.8V405zM675.30 405V301.9h0.8V405zM676.10 405V304.8h0.8V405zM676.90 405V293.9h0.8V405zM677.70 405V305.9h0.8V405zM678.50 405V308h0.8V405zM679.30 405V288.9h0.8V405zM680.10 405V297.1h0.8V405zM680.90 405V293.1h0.8V405zM681.70 405V287h0.8V405zM682.50 405V291.6h0.8V405zM683.30 405V305.3h0.8V405zM684.10 405V298.6h0.8V405zM684.90 405V297.8h0.8V405zM685.70 405V292.7h0.8V405zM686.50 405V288.7h0.8V405zM687.30 405V294.1h0.8V405zM688.10 405V308.5h0.8V405zM688.90 405V291.6h0.8V405zM689.70 405V310.2h0.8V405zM690.50 405V305.3h0.8V405zM691.30 405V310.7h0.8V405zM692.10 405V295h0.8V405zM692.90 405V308.4h0.8V405zM693.70 405V287.7h0.8V405zM694.50 405V295.3h0.8V405zM695.30 405V310.8h0.8V405zM696.10 405V301.5h0.8V405zM696.90 405V287.6h0.8V405zM697.70 405V301.4h0.8V405zM698.50 405V309.3h0.8V405zM699.30 405V314.4h0.8V405zM700.10 405V299.1h0.8V405zM700.90 405V302.7h0.8V405zM701.70 405V291.8h0.8V405zM702.50 405V300.1h0.8V405zM703.30 405V312.2h0.8V405zM704.10 405V283.3h0.8V405zM704.90 405V300.3h0.8V405zM705.70 405V303.1h0.8V405zM706.50 405V309.7h0.8V405zM707.30 405V289.2h0.8V405zM708.10 405V314.3h0.8V405zM708.90 405V303.9h0.8V405zM709.70 405V310.2h0.8V405zM710.50 405V297.3h0.8V405zM711.30 405V298.2h0.8V405zM712.10 405V308.5h0.8V405zM712.90 405V314.2h0.8V405zM713.70 405V302.5h0.8V405zM714.50 405V304.9h0.8V405zM715.30 405V295.9h0.8V405zM716.10 405V299.1h0.8V405zM716.90 405V311.5h0.8V405zM717.70 405V303.9h0.8V405zM718.50 405V296.4h0.8V405zM719.30 405V292.5h0.8V405zM720.10 405V306.4h0.8V405zM720.90 405V292.8h0.8V405zM721.70 405V307.1h0.8V405zM722.50 405V304.8h0.8V405zM723.30 405V311h0.8V405zM724.10 405V305.6h0.8V405zM724.90 405V308.7h0.8V405zM725.70 405V300.6h0.8V405zM726.50 405V299.6h0.8V405zM727.30 405V305.4h0.8V405zM728.10 405V307.4h0.8V405zM728.90 405V306.7h0.8V405zM729.70 405V303.6h0.8V405zM730.50 405V304.7h0.8V405zM731.30 405V294.1h0.8V405zM732.10 405V287h0.8V405zM732.90 405V298h0.8V405zM733.70 405V313.8h0.8V405zM734.50 405V301h0.8V405zM735.30 405V313.7h0.8V405zM736.10 405V310.9h0.8V405zM736.90 405V304.2h0.8V405zM737.70 405V299.4h0.8V405zM738.50 405V289.6h0.8V405zM739.30 405V300.1h0.8V405zM740.10 405V298h0.8V405zM740.90 405V301.8h0.8V405zM741.70 405V289.2h0.8V405zM742.50 405V299.7h0.8V405zM743.30 405V300.1h0.8V405zM744.10 405V298.8h0.8V405zM744.90 405V293.6h0.8V405zM745.70 405V310.6h0.8V405zM746.50 405V303.1h0.8V405zM747.30 405V309h0.8V405zM748.10 405V285.2h0.8V405zM748.90 405V303.6h0.8V405zM749.70 405V299.7h0.8V405zM750.50 405V303.7h0.8V405zM751.30 405V293.4h0.8V405zM752.10 405V280.3h0.8V405zM752.90 405V308h0.8V405zM753.70 405V304.5h0.8V405zM754.50 405V298.7h0.8V405zM755.30 405V307.6h0.8V405zM756.10 405V307.2h0.8V405zM756.90 405V297.1h0.8V405zM757.70 405V298.7h0.8V405zM758.50 405V296.5h0.8V405zM759.30 405V304.8h0.8V405zM760.10 405V313.2h0.8V405zM760.90 405V286.7h0.8V405zM761.70 405V302.7h0.8V405zM762.50 405V313.1h0.8V405zM763.30 405V293.8h0.8V405zM764.10 405V313.1h0.8V405zM764.90 405V310.1h0.8V405zM765.70 405V294.7h0.8V405zM766.50 405V300.5h0.8V405zM767.30 405V281.9h0.8V405zM768.10 405V313h0.8V405zM768.90 405V293.9h0.8V405zM769.70 405V307.7h0.8V405zM770.50 405V278.5h0.8V405zM771.30 405V291h0.8V405zM772.10 405V274.9h0.8V405zM772.90 405V277.8h0.8V405zM773.70 405V282h0.8V405zM774.50 405V291h0.8V405zM775.30 405V285.2h0.8V405zM776.10 405V288.5h0.8V405zM776.90 405V281.9h0.8V405zM777.70 405V291h0.8V405zM778.50 405V278.1h0.8V405zM779.30 405V291h0.8V405zM780.10 405V271.2h0.8V405zM780.90 405V290.2h0.8V405zM781.70 405V285.6h0.8V405zM782.50 405V284.2h0.8V405zM783.30 405V283.9h0.8V405zM784.10 405V287.9h0.8V405zM784.90 405V271.7h0.8V405zM785.70 405V282.4h0.8V405zM786.50 405V274.8h0.8V405zM787.30 405V276.3h0.8V405zM788.10 405V286.9h0.8V405zM788.90 405V281.1h0.8V405zM789.70 405V269h0.8V405zM790.50 405V282.8h0.8V405zM791.30 405V282.8h0.8V405zM792.10 405V270.7h0.8V405zM792.90 405V280.7h0.8V405zM793.70 405V291h0.8V405zM794.50 405V277.8h0.8V405zM795.30 405V281h0.8V405zM796.10 405V274.1h0.8V405zM796.90 405V279.4h0.8V405zM797.70 405V260h0.8V405zM798.50 405V286.6h0.8V405zM799.30 405V270h0.8V405zM800.10 405V270.7h0.8V405zM800.90 405V291h0.8V405zM801.70 405V291h0.8V405zM802.50 405V285.6h0.8V405zM803.30 405V280.8h0.8V405zM804.10 405V281.7h0.8V405zM804.90 405V280.2h0.8V405zM805.70 405V270.5h0.8V405zM806.50 405V278.2h0.8V405zM807.30 405V284.4h0.8V405zM808.10 405V285.6h0.8V405zM808.90 405V281.5h0.8V405zM809.70 405V291h0.8V405zM810.50 405V291h0.8V405zM811.30 405V288h0.8V405zM812.10 405V282.1h0.8V405zM812.90 405V278.7h0.8V405zM813.70 405V281.7h0.8V405zM814.50 405V267.2h0.8V405zM815.30 405V281.4h0.8V405zM816.10 405V280.3h0.8V405zM816.90 405V270.1h0.8V405zM817.70 405V287.3h0.8V405zM818.50 405V284.8h0.8V405zM819.30 405V281h0.8V405zM820.10 405V286.9h0.8V405zM820.90 405V287.1h0.8V405zM821.70 405V291h0.8V405zM822.50 405V280.7h0.8V405zM823.30 405V272.4h0.8V405zM824.10 405V278.4h0.8V405zM824.90 405V278.5h0.8V405zM825.70 405V285.7h0.8V405zM826.50 405V283.6h0.8V405zM827.30 405V269.7h0.8V405zM828.10 405V287.7h0.8V405zM828.90 405V281.7h0.8V405zM829.70 405V279.8h0.8V405zM830.50 405V282.3h0.8V405zM831.30 405V280.2h0.8V405zM832.10 405V274.8h0.8V405zM832.90 405V280.1h0.8V405zM770.4 300V266h1.2V300z" fill="#1b1464"/><path d="M86.5 405.4H874.6" stroke="#555" stroke-width="1.2" fill="none"/><polygon points="127,179.7 129,178.1 131,179.5 133,179.2 135,179.7 137,179.4 139,178.2 141,179.4 143,178.2 145,179.5 147,178.9 149,178.2 151,179.2 153,178 155,179 157,178.4 159,179 161,179.4 163,178.3 165,179.2 167,179.2 169,179.4 171,179.4 173,178.8 175,179.5 177,179.5 179,178.2 181,178.6 183,178.6 185,177.9 187,178.7 189,178.1 191,179.4 193,178.5 195,178.6 197,178 199,179.6 201,178.8 203,178.9 205,179.6 207,178.2 209,178.3 211,177.9 213,179.1 215,177.9 217,178.9 219,179.1 221,179.4 223,177.9 225,178.7 227,178.3 229,178.5 231,178.9 233,178.1 235,179.1 237,179.3 239,178.5 241,179.3 243,178.5 245,179.2 247,178.2 249,178.5 251,179.2 253,179.2 255,177.8 257,179.5 259,178.2 261,178.9 263,178.7 265,178.5 267,177.7 269,179.4 271,179.4 273,179.1 275,179.3 277,178.8 279,178.9 281,178.6 283,178.8 285,178.6 287,179.4 289,178.2 291,177.8 293,179.3 295,178.1 297,178.6 299,177.8 301,178.1 303,178.1 305,177.7 307,179.1 309,178.6 311,177.9 313,178.4 315,178.7 317,178.1 319,177.9 321,178.2 323,177.6 325,179.1 327,178.5 329,178 331,178 333,177.8 335,179.1 337,177.6 339,178.3 341,177.7 343,179.2 345,177.7 347,178.1 349,178.6 351,178.9 353,178.8 355,178.8 357,178.8 359,179.1 361,179 363,178.8 365,178.3 367,178.4 369,178.8 371,178.5 373,178.2 375,178.7 377,178.1 379,178.1 381,178.8 383,178.3 385,177.7 387,177.6 389,178.4 391,179 393,178.8 395,179 397,178.1 399,177.3 401,178.3 403,178.9 405,178.3 407,178.2 409,178.5 411,177.9 413,177.9 415,178.5 417,177.4 419,178 421,178.3 423,179 425,178 427,179 429,178.2 431,177.5 433,179 435,178.1 437,178.8 439,178.7 441,178.8 443,177.5 445,178.1 447,177.5 449,178.3 451,177.8 453,178.3 455,177.9 457,177.7 459,177.1 461,178.6 463,178.3 465,178 467,177.6 469,178 471,178.1 473,177.3 475,178.4 477,177.2 479,178 481,178.2 483,177.2 485,178.4 487,178.3 489,177.3 491,177.2 493,178.1 495,177.8 497,177.1 499,178.1 501,177.8 503,177.4 505,178.7 507,177.6 509,178.5 511,178.1 513,177.9 515,177.4 517,178.3 519,177.6 521,177.9 523,177.4 525,177.6 527,178.7 529,178 531,178 533,177.7 535,177.2 537,177.6 539,177.3 541,177.4 543,178.2 545,177.3 547,177.2 549,178.5 551,177.8 553,178.4 555,177.6 557,177.7 559,177.4 561,177.9 563,177.8 565,178.3 567,178.6 569,177.7 571,178.1 573,178.6 575,177.9 577,177.5 579,177.7 581,178 583,177.7 585,177.3 587,177.6 589,177.2 591,177.7 593,177.5 595,177.6 597,177.2 599,177.5 601,178.6 603,178.6 605,177.2 607,177.1 609,178.2 611,177.7 613,178.3 615,178.5 617,178.1 619,177.2 621,178.3 623,177.1 625,177.3 627,177.5 629,177.1 631,178.1 633,178.5 635,178.3 637,177.8 639,177.6 641,178.5 643,177.5 645,178.5 647,177.1 649,177.2 651,177.4 653,178.3 655,178.3 657,178.3 659,177.5 661,178.7 663,178.7 665,178.3 667,178.1 669,177.1 671,177.8 673,178.7 675,178.4 677,178.3 679,177.5 681,178.7 683,178 685,177.1 687,177.7 689,177.6 691,178.3 693,177.4 695,177.9 697,178.7 699,177.5 701,177.3 703,177.6 705,178 707,177.3 709,178.1 711,178.4 713,177.2 715,177.6 717,177.1 719,177.4 721,177.8 723,177.6 725,177.7 727,177.1 729,178.8 731,177.2 733,178.8 735,177.2 737,177.8 739,178 741,178.7 743,178.1 745,178.2 747,177.4 749,177 751,178.5 753,177.3 755,178.5 757,177.3 759,178.5 761,177.6 763,178.5 765,177.7 767,177.7 769,177.4 771,178 773,178.5 775,178.6 777,177.9 779,177.3 781,178 783,178.2 785,177.8 787,177.2 789,177.8 791,178.3 793,178.5 795,178.4 797,177.5 799,177.9 801,177.6 803,178.2 805,178.6 807,177.5 809,178 811,177.4 813,177.6 815,178.7 817,178.6 819,178.7 821,178.5 823,178.2 825,177.5 827,178.7 829,178.2 831,177.6 833,177.1 833,181.5 831,182.2 829,181.6 827,181.8 825,181.9 823,181.9 821,181.4 819,181.9 817,182.3 815,182.2 813,181.8 811,181.4 809,181.6 807,181.7 805,181.5 803,182.1 801,181.7 799,181.7 797,182 795,181.7 793,182.2 791,181.3 789,181.5 787,181.3 785,182.3 783,181.5 781,181.4 779,181.6 777,181.8 775,182.2 773,182 771,181.9 769,181.3 767,182.1 765,181.9 763,181.6 761,181.5 759,182 757,182.1 755,182.2 753,181.9 751,181.6 749,182.1 747,181.4 745,181.6 743,182.2 741,181.9 739,181.3 737,181.5 735,181.8 733,181.9 731,182 729,182.1 727,181.3 725,181.5 723,181.8 721,181.4 719,182 717,181.6 715,181.5 713,181.6 711,182.1 709,181.8 707,182 705,182.1 703,182.1 701,181.9 699,182.2 697,181.7 695,181.7 693,181.5 691,182 689,181.4 687,181.5 685,181.7 683,181.5 681,181.9 679,181.8 677,182.1 675,181.3 673,181.4 671,181.8 669,182 667,181.8 665,182.1 663,182 661,181.7 659,181.4 657,182.1 655,181.7 653,181.4 651,182.2 649,182.1 647,181.5 645,181.9 643,181.3 641,182.1 639,181.3 637,182 635,181.6 633,181.9 631,181.5 629,181.6 627,181.7 625,181.5 623,181.3 621,182 619,182.2 617,181.5 615,181.7 613,181.5 611,182 609,181.7 607,182 605,181.6 603,182.2 601,182.1 599,181.7 597,182 595,181.5 593,181.4 591,181.8 589,181.9 587,182 585,182.2 583,181.4 581,181.6 579,182 577,182.1 575,181.8 573,181.4 571,181.5 569,181.5 567,181.9 565,181.6 563,181.4 561,181.5 559,182.3 557,182.3 555,182 553,181.5 551,182.1 549,181.4 547,181.6 545,182 543,181.6 541,181.3 539,181.6 537,181.5 535,182.1 533,181.4 531,181.7 529,181.4 527,181.6 525,181.5 523,181.5 521,182.1 519,182.2 517,181.5 515,181.7 513,182.2 511,182.3 509,181.6 507,182.2 505,182.2 503,181.3 501,181.9 499,182.3 497,182.2 495,181.7 493,181.6 491,182.2 489,181.6 487,181.7 485,181.6 483,181.3 481,182.1 479,182.1 477,181.5 475,181.4 473,181.5 471,181.7 469,182.3 467,181.9 465,181.9 463,181.5 461,181.9 459,181.6 457,182 455,182.1 453,181.3 451,182.3 449,181.9 447,181.5 445,181.8 443,181.6 441,181.7 439,182.3 437,182 435,181.4 433,182.1 431,181.6 429,182.1 427,181.6 425,181.9 423,181.8 421,182.2 419,181.9 417,181.7 415,181.8 413,182.2 411,181.9 409,181.7 407,181.8 405,182.3 403,182.1 401,181.8 399,181.3 397,182.2 395,181.5 393,182.1 391,181.6 389,181.4 387,181.9 385,181.6 383,181.7 381,182.1 379,181.6 377,181.9 375,181.6 373,181.8 371,181.7 369,182.2 367,181.7 365,182.3 363,181.9 361,181.3 359,181.4 357,182 355,181.8 353,182 351,181.8 349,182.1 347,182 345,181.6 343,182 341,181.5 339,182 337,181.7 335,181.7 333,181.4 331,182.1 329,182.3 327,181.8 325,181.5 323,181.7 321,181.9 319,181.8 317,181.5 315,181.8 313,181.8 311,182 309,182 307,181.9 305,181.8 303,181.5 301,181.7 299,181.4 297,181.4 295,181.8 293,181.8 291,181.9 289,181.9 287,181.6 285,181.7 283,181.6 281,182.2 279,181.6 277,181.6 275,181.3 273,182.2 271,181.9 269,182.1 267,181.4 265,181.8 263,181.4 261,181.7 259,181.7 257,182.2 255,181.8 253,182.1 251,182.2 249,182.3 247,181.6 245,181.6 243,182.2 241,181.8 239,181.7 237,182.2 235,181.5 233,181.9 231,182.2 229,181.4 227,181.4 225,181.8 223,181.4 221,182 219,181.4 217,181.8 215,181.9 213,181.5 211,181.4 209,182.1 207,181.4 205,181.5 203,181.3 201,181.8 199,181.8 197,182.2 195,182.1 193,182 191,182.2 189,182 187,181.8 185,181.8 183,181.9 181,181.5 179,182.1 177,181.6 175,181.8 173,181.3 171,182.2 169,181.6 167,181.4 165,181.7 163,181.4 161,181.9 159,182 157,181.5 155,181.8 153,181.4 151,181.5 149,182.1 147,181.4 145,181.5 143,181.7 141,181.8 139,181.3 137,181.6 135,181.3 133,181.6 131,181.4 129,181.6 127,182.2" fill="#111"/><polygon points="127,178.1 128.5,179 130,178.6 131.5,178.6 133,178.4 134.5,179 136,177.9 137.5,179 139,178.9 140.5,178.5 142,178.5 143.5,178.9 145,179.1 146.5,178.4 148,178.7 149.5,178.7 151,178.5 152.5,178.3 154,178 155.5,179.2 157,178.8 158.5,178 160,178.3 161.5,178.3 163,179.1 164.5,179.4 166,179.1 167.5,178.5 169,178.2 170.5,178.3 172,178.2 173.5,179.3 175,179 176.5,178.6 178,179.4 179.5,178.5 181,178.6 182.5,178.7 184,178.8 185.5,179.5 187,178.7 188.5,179.4 190,178.5 191.5,179.5 193,179.5 194.5,179.4 196,179.3 197.5,179.2 199,178.5 200.5,178.8 202,178.4 203.5,179.3 205,179.1 206.5,178.7 208,179.6 209.5,178.9 211,179.2 212.5,178.7 214,178.6 215.5,179.8 217,179.6 218.5,179.1 220,179.7 221.5,179.3 223,179.4 224.5,180 226,179.5 227.5,179.3 229,179.9 230.5,179.1 232,179.6 233.5,179.7 235,179.3 236.5,178.7 238,179.3 239.5,178.9 241,179.2 242.5,179.6 244,179 245.5,178.8 247,179.7 248.5,179.1 250,179.3 251.5,179.4 253,180.1 254.5,179.8 256,179.6 257.5,179.9 259,179.8 260.5,180.3 262,179.7 263.5,179.5 265,180.1 266.5,179.9 268,179.3 269.5,179.1 271,179.1 272.5,180.3 274,179.6 275.5,179.9 277,179.8 278.5,180.3 280,179.2 281.5,180.1 283,180.3 284.5,179.5 286,180 287.5,179.7 289,179.6 290.5,179.5 292,179.7 293.5,179.4 295,180.1 296.5,180.3 298,179.4 299.5,179.3 301,180.2 302.5,179.7 304,179.7 305.5,180.6 307,180.6 308.5,180.2 310,179.9 311.5,180.1 313,179.5 314.5,179.4 316,179.9 317.5,180.3 319,180.6 320.5,179.7 322,179.7 323.5,180.1 325,180.1 326.5,180 328,179.8 329.5,179.9 331,179.8 332.5,179.8 334,180.3 335.5,180.2 337,180.8 338.5,180.3 340,179.9 341.5,179.6 343,180 344.5,181 346,181 347.5,180.3 349,179.8 350.5,180.9 352,180.1 353.5,180.9 355,180 356.5,179.8 358,180.3 359.5,180 361,180.7 362.5,181 364,181.1 365.5,180.7 367,181.1 368.5,180.7 370,179.9 371.5,181 373,180.9 374.5,181 376,180.2 377.5,180.9 379,181 380.5,181.1 382,180.1 383.5,180.3 385,181 386.5,180.7 388,181.2 389.5,180.6 391,180.6 392.5,181.2 394,181 395.5,180.3 397,180.3 398.5,181.1 400,181.4 401.5,181.5 403,181.3 404.5,181.4 406,180.6 407.5,181.1 409,180.6 410.5,180.2 412,181.3 413.5,180.7 415,180.9 416.5,181.1 418,181.7 419.5,181.3 421,181.5 422.5,181.5 424,181.5 425.5,181.5 427,181.1 428.5,181.3 430,180.5 431.5,181.5 433,180.6 434.5,181.4 436,181.5 437.5,181.8 439,181.3 440.5,181.4 442,180.9 443.5,181.1 445,181 446.5,180.7 448,181.4 449.5,181.4 451,181.4 452.5,181.4 454,180.6 455.5,181.2 457,181.7 458.5,181.5 460,181.8 461.5,180.9 463,180.8 464.5,181.1 466,181.2 467.5,181.7 469,182.1 470.5,181 472,181.3 473.5,181.8 475,181.1 476.5,181.2 478,181.5 479.5,181.3 481,181.4 482.5,181.9 484,181.9 485.5,181.6 487,181.5 488.5,182 490,181 491.5,181.6 493,181.2 494.5,182.1 496,181.7 497.5,181.2 499,181.1 500.5,181.8 502,181.2 503.5,182.2 505,182.2 506.5,181.3 508,181.8 509.5,181.9 511,181.5 512.5,181.8 514,181.4 515.5,181.5 517,181.7 518.5,182 520,182 521.5,182.2 523,182.4 524.5,181.5 526,182.1 527.5,181.4 529,181.7 530.5,182.3 532,181.5 533.5,182.1 535,182 536.5,181.6 538,182 539.5,181.5 541,182.1 542.5,181.3 544,181.3 545.5,182.1 547,182.2 548.5,181.6 550,182 551.5,181.4 553,182.7 554.5,182.1 556,181.6 557.5,182.1 559,182.1 560.5,182 562,181.8 563.5,182.2 565,181.8 566.5,181.7 568,182.6 569.5,182.7 571,182.7 572.5,181.8 574,182.8 575.5,181.9 577,182.8 578.5,182.3 580,181.5 581.5,181.7 583,182.4 584.5,182.9 586,182.5 587.5,182.5 589,181.7 590.5,182.2 592,182.9 593.5,181.8 595,181.8 596.5,182.7 598,182.3 599.5,182.4 601,182.2 602.5,181.9 604,181.8 605.5,183 607,182.3 608.5,182.3 610,182.7 611.5,182.7 613,182 614.5,182.5 616,182.5 617.5,183.1 619,182.2 620.5,181.9 622,182.3 623.5,181.9 625,182.1 626.5,182.2 628,182.8 629.5,182 631,181.9 632.5,183.1 634,182.1 635.5,182.7 637,182.9 638.5,182.3 640,183.2 641.5,183.2 643,182.9 644.5,182.5 646,182.5 647.5,182.1 649,182.2 650.5,182.2 652,182.8 653.5,182.8 655,183.1 656.5,183.3 658,182.4 659.5,182.5 661,182.3 662.5,182.1 664,182.1 665.5,183 667,182.4 668.5,182.2 670,182.8 671.5,182.6 673,183.4 674.5,183.1 676,182.3 677.5,182.2 679,182.7 680.5,183.1 682,182.6 683.5,183.1 685,183.2 686.5,183.3 688,183.2 689.5,182.8 691,182.8 692.5,182.8 694,183.6 695.5,183.5 697,183.5 698.5,183.2 700,182.7 701.5,183.4 703,183.2 704.5,182.5 706,183.5 707.5,182.5 709,183 710.5,183.6 712,183.5 713.5,183.1 715,183.5 716.5,183.5 718,183.5 719.5,183.1 721,183.8 722.5,183.1 724,183 725.5,183.5 727,183.6 728.5,183.8 730,183.1 731.5,182.6 733,183.1 734.5,183.1 736,182.9 737.5,183.6 739,182.6 740.5,183.1 742,182.8 743.5,182.8 745,182.7 746.5,182.7 748,183.4 749.5,183.7 751,183.1 752.5,183.5 754,183.8 755.5,183.6 757,182.7 758.5,183.4 760,183 761.5,183 763,183.8 764.5,182.9 766,184 767.5,183.6 769,182.8 770.5,183.1 772,183 773.5,182.9 775,183 776.5,183.4 778,183 779.5,183 781,182.9 782.5,182.9 784,182.9 785.5,183.9 787,183.9 788.5,183.6 790,183.6 791.5,183.3 793,183.7 794.5,183.2 796,177.1 797.5,177.8 799,177.5 800.5,177.9 802,177.2 803.5,178.4 805,178.4 806.5,177.3 808,177.6 809.5,177.9 811,177.9 812.5,177.5 814,178.3 815.5,177.4 817,177.5 818.5,178.2 820,178.3 821.5,178.1 823,177.1 824.5,178.1 826,177.5 827.5,177.8 829,177.1 830.5,177 832,177.2 833.5,177.7 833.5,185 832,185.3 830.5,185.3 829,185.8 827.5,185.8 826,186.4 824.5,186.4 823,185.6 821.5,185.4 820,186.3 818.5,186.1 817,186.3 815.5,185.7 814,185.4 812.5,185.5 811,186.4 809.5,185.3 808,185.7 806.5,185.7 805,185.2 803.5,185.8 802,186.3 800.5,186 799,186.3 797.5,185.1 796,186.3 794.5,191 793,191.1 791.5,191 790,191.3 788.5,190.2 787,190.2 785.5,191.2 784,191.1 782.5,190 781,190.7 779.5,190.3 778,191 776.5,190.5 775,191.1 773.5,191 772,191.2 770.5,190 769,190.8 767.5,190 766,190.9 764.5,191 763,190.7 761.5,190.7 760,191.1 758.5,190.5 757,190.9 755.5,191.2 754,190 752.5,189.8 751,189.9 749.5,190.8 748,189.7 746.5,190.2 745,189.6 743.5,190.3 742,190.1 740.5,190.6 739,189.6 737.5,190.5 736,189.6 734.5,190.8 733,189.9 731.5,189.6 730,189.9 728.5,190.1 727,189.9 725.5,190.6 724,190.5 722.5,190.7 721,190.9 719.5,190.8 718,190.8 716.5,189.6 715,190 713.5,190 712,190.2 710.5,190.1 709,190.2 707.5,189.5 706,189.5 704.5,190.1 703,190.6 701.5,190.8 700,189.5 698.5,189.9 697,190.2 695.5,190.3 694,190.1 692.5,190 691,190.5 689.5,189.4 688,189.3 686.5,190.4 685,190.4 683.5,189.9 682,189.2 680.5,190.7 679,190.7 677.5,189.2 676,189.5 674.5,190.5 673,189.3 671.5,190 670,190.5 668.5,189.2 667,189.9 665.5,189.6 664,189.9 662.5,190.6 661,189.2 659.5,189.2 658,189.7 656.5,189.7 655,189.9 653.5,190 652,189 650.5,190.5 649,189.2 647.5,189.4 646,189.2 644.5,189.4 643,189.3 641.5,190.2 640,190 638.5,189.1 637,190.3 635.5,189.9 634,190.4 632.5,189 631,189.2 629.5,189 628,189.1 626.5,189.9 625,189.6 623.5,189.7 622,189 620.5,188.9 619,188.8 617.5,189.4 616,190.1 614.5,190.2 613,189.6 611.5,189.8 610,190 608.5,189.2 607,189.3 605.5,189.2 604,189.5 602.5,189 601,189.2 599.5,189.4 598,189.2 596.5,188.7 595,189 593.5,189.9 592,189.1 590.5,189.2 589,189.4 587.5,188.9 586,188.9 584.5,190.1 583,189.3 581.5,188.7 580,189.8 578.5,189.4 577,189.6 575.5,189.2 574,189.5 572.5,189.3 571,188.6 569.5,189.7 568,188.8 566.5,189.6 565,189.3 563.5,188.4 562,189.5 560.5,189.7 559,189.1 557.5,189.8 556,189 554.5,189.1 553,189.3 551.5,189.5 550,189.1 548.5,188.9 547,188.4 545.5,189.3 544,189.4 542.5,188.5 541,189.2 539.5,188.8 538,189.2 536.5,188.7 535,188.8 533.5,188.2 532,189.2 530.5,188.8 529,189.5 527.5,188.3 526,188.5 524.5,188.6 523,188.4 521.5,189 520,188.1 518.5,188.6 517,188.4 515.5,188.6 514,188.3 512.5,189.3 511,188.7 509.5,189.6 508,188.2 506.5,188.8 505,188.6 503.5,188.4 502,188.2 500.5,189.3 499,188 497.5,189.4 496,189 494.5,189.2 493,188.3 491.5,188.7 490,188.7 488.5,188.1 487,188.6 485.5,189 484,189.3 482.5,188.8 481,188.7 479.5,188.3 478,188.8 476.5,188.4 475,188.4 473.5,188.8 472,189.4 470.5,188.6 469,189 467.5,189.3 466,188.6 464.5,188.3 463,187.8 461.5,189 460,187.9 458.5,188.1 457,188.7 455.5,189.2 454,187.7 452.5,187.9 451,188.3 449.5,189.2 448,188.2 446.5,188.8 445,189.2 443.5,188.5 442,188.7 440.5,187.7 439,188.5 437.5,188.4 436,187.7 434.5,187.9 433,188.8 431.5,189.2 430,188.2 428.5,188.4 427,187.8 425.5,188.8 424,188.7 422.5,188.3 421,188.3 419.5,189 418,189.1 416.5,187.7 415,187.9 413.5,187.6 412,188.8 410.5,187.6 409,188.9 407.5,189 406,187.6 404.5,187.8 403,188.7 401.5,188.9 400,189 398.5,187.5 397,189.1 395.5,187.7 394,188.7 392.5,188.9 391,188.8 389.5,188.2 388,188.5 386.5,188.8 385,187.9 383.5,188.7 382,187.8 380.5,188.8 379,188.3 377.5,189 376,188.4 374.5,187.7 373,188.1 371.5,187.8 370,188.3 368.5,188.8 367,188.2 365.5,188.7 364,188.4 362.5,188.5 361,188.8 359.5,188 358,187.8 356.5,188.1 355,187.7 353.5,187.3 352,188.7 350.5,187.5 349,187.8 347.5,187.5 346,188 344.5,187.5 343,187.4 341.5,187.6 340,187.8 338.5,188.3 337,187.2 335.5,188.7 334,187.6 332.5,188.7 331,187.7 329.5,188.4 328,187.6 326.5,187.7 325,188.2 323.5,188.1 322,187.8 320.5,187.3 319,187.4 317.5,187.3 316,188.3 314.5,187.2 313,188 311.5,187.1 310,187.5 308.5,187.9 307,188.1 305.5,187.7 304,187.6 302.5,187.7 301,188.2 299.5,187.4 298,188.1 296.5,187.9 295,187.2 293.5,188.4 292,187.1 290.5,188.5 289,187.3 287.5,188.4 286,187.3 284.5,187.3 283,187.4 281.5,187 280,187.4 278.5,187.7 277,188.3 275.5,188.2 274,188.5 272.5,187.2 271,187.9 269.5,187.5 268,187.8 266.5,187.4 265,187 263.5,187.4 262,187.6 260.5,188.3 259,187.1 257.5,187.2 256,187.4 254.5,188.4 253,187.4 251.5,187.5 250,187.4 248.5,187.6 247,188 245.5,187.9 244,188.2 242.5,187.2 241,187.8 239.5,188 238,188 236.5,186.8 235,188.3 233.5,187.7 232,187.6 230.5,187.2 229,187 227.5,188.3 226,186.8 224.5,187.6 223,187.3 221.5,187.6 220,187.3 218.5,186.8 217,188.1 215.5,187.2 214,187.7 212.5,187.3 211,186.9 209.5,187.3 208,188 206.5,186.7 205,188 203.5,186.9 202,186.6 200.5,187.9 199,187.5 197.5,186.8 196,187.7 194.5,187.5 193,187.9 191.5,186.6 190,187.5 188.5,187.3 187,187 185.5,188 184,187.8 182.5,186.7 181,186.6 179.5,188 178,187.1 176.5,187.8 175,187.7 173.5,187.7 172,187.9 170.5,187.4 169,187.5 167.5,187.2 166,186.9 164.5,187.4 163,187.1 161.5,186.5 160,186.7 158.5,187.3 157,186.7 155.5,187.8 154,187.6 152.5,186.6 151,187.5 149.5,187.8 148,186.5 146.5,186.5 145,187.2 143.5,187.3 142,187.3 140.5,186.8 139,186.5 137.5,187.7 136,187.2 134.5,186.6 133,187 131.5,187.2 130,187.2 128.5,187.4 127,187" fill="#08a60c"/><g fill="#08a60c"><circle cx="251.4" cy="187.7" r="1.8"/><circle cx="448" cy="187.9" r="1.8"/><circle cx="304.6" cy="183.5" r="1.8"/><circle cx="199" cy="184.3" r="1.8"/><circle cx="735" cy="187.6" r="1.8"/><circle cx="393.2" cy="188.5" r="1.8"/><circle cx="757.2" cy="188.9" r="1.8"/><circle cx="181.4" cy="184.8" r="1.8"/><circle cx="440.6" cy="189" r="1.8"/><circle cx="382.7" cy="186.4" r="1.8"/><circle cx="572.9" cy="185.4" r="1.8"/><circle cx="495.6" cy="187.2" r="1.8"/><circle cx="766.7" cy="187.6" r="1.8"/><circle cx="384.1" cy="188.8" r="1.8"/><circle cx="168.1" cy="186.3" r="1.8"/><circle cx="609.2" cy="187.1" r="1.8"/><circle cx="443.2" cy="187.5" r="1.8"/><circle cx="755.3" cy="189.4" r="1.8"/><circle cx="655.9" cy="183.4" r="1.8"/><circle cx="356.9" cy="182.2" r="1.8"/><circle cx="798.9" cy="185.5" r="1.8"/><circle cx="229.7" cy="184.8" r="1.8"/><circle cx="534" cy="182.6" r="1.8"/><circle cx="404.1" cy="187.2" r="1.8"/><circle cx="579.6" cy="184.7" r="1.8"/><circle cx="664.8" cy="185.4" r="1.8"/><circle cx="511.2" cy="185.4" r="1.8"/><circle cx="816.6" cy="183.6" r="1.8"/><circle cx="694.7" cy="188.5" r="1.8"/><circle cx="395.9" cy="188.8" r="1.8"/><circle cx="627.6" cy="188.2" r="1.8"/><circle cx="323.3" cy="182.1" r="1.8"/><circle cx="532.9" cy="188.6" r="1.8"/><circle cx="686.7" cy="186" r="1.8"/><circle cx="226.5" cy="184.2" r="1.8"/><circle cx="745.7" cy="184.9" r="1.8"/><circle cx="647.8" cy="184.3" r="1.8"/><circle cx="347.6" cy="181.5" r="1.8"/><circle cx="337.5" cy="183.9" r="1.8"/><circle cx="808.7" cy="186" r="1.8"/><circle cx="259.8" cy="182.9" r="1.8"/><circle cx="792.4" cy="185.5" r="1.8"/><circle cx="353.9" cy="184.5" r="1.8"/><circle cx="204.3" cy="182.1" r="1.8"/><circle cx="405.4" cy="184.4" r="1.8"/><circle cx="806.4" cy="180.7" r="1.8"/><circle cx="271.6" cy="187.6" r="1.8"/><circle cx="445" cy="188.1" r="1.8"/><circle cx="576.5" cy="188.6" r="1.8"/><circle cx="349.6" cy="182.2" r="1.8"/><circle cx="661" cy="186.7" r="1.8"/><circle cx="521.4" cy="187.4" r="1.8"/><circle cx="657.9" cy="185.2" r="1.8"/><circle cx="383.4" cy="188.4" r="1.8"/><circle cx="500.7" cy="184.3" r="1.8"/><circle cx="571.7" cy="184.5" r="1.8"/><circle cx="671" cy="183.5" r="1.8"/><circle cx="710" cy="187.8" r="1.8"/><circle cx="377" cy="188.5" r="1.8"/><circle cx="314.9" cy="182.7" r="1.8"/><circle cx="177.2" cy="184.2" r="1.8"/><circle cx="658.6" cy="188.3" r="1.8"/><circle cx="418.6" cy="187.7" r="1.8"/><circle cx="206.3" cy="182.5" r="1.8"/><circle cx="581.9" cy="190" r="1.8"/><circle cx="574.3" cy="187.9" r="1.8"/><circle cx="673.3" cy="186.2" r="1.8"/><circle cx="790" cy="189.7" r="1.8"/><circle cx="368.6" cy="184.2" r="1.8"/><circle cx="695.2" cy="186" r="1.8"/><circle cx="258.8" cy="187.2" r="1.8"/><circle cx="502.4" cy="186.1" r="1.8"/><circle cx="599.3" cy="189.7" r="1.8"/><circle cx="222" cy="182.8" r="1.8"/><circle cx="174.4" cy="183.1" r="1.8"/><circle cx="481.5" cy="188.5" r="1.8"/><circle cx="598.1" cy="187.2" r="1.8"/><circle cx="412.2" cy="185.9" r="1.8"/><circle cx="320.8" cy="187.4" r="1.8"/><circle cx="683.1" cy="189.7" r="1.8"/><circle cx="234.4" cy="185.5" r="1.8"/><circle cx="658.9" cy="187" r="1.8"/><circle cx="760.4" cy="190.7" r="1.8"/><circle cx="651.1" cy="189.4" r="1.8"/><circle cx="584.8" cy="189.4" r="1.8"/><circle cx="220.4" cy="185.6" r="1.8"/><circle cx="623.5" cy="187.6" r="1.8"/><circle cx="321.7" cy="181.4" r="1.8"/><circle cx="552.8" cy="188.8" r="1.8"/><circle cx="320.2" cy="182.5" r="1.8"/><circle cx="285.6" cy="181.4" r="1.8"/><circle cx="603.9" cy="190.2" r="1.8"/><circle cx="692.7" cy="186.1" r="1.8"/><circle cx="620.4" cy="183.4" r="1.8"/><circle cx="718.4" cy="186" r="1.8"/><circle cx="130.4" cy="184.5" r="1.8"/><circle cx="225.7" cy="182.4" r="1.8"/><circle cx="169.6" cy="183.3" r="1.8"/><circle cx="518.7" cy="188.4" r="1.8"/><circle cx="155.9" cy="186.2" r="1.8"/><circle cx="205.8" cy="181.8" r="1.8"/><circle cx="571.1" cy="185.1" r="1.8"/><circle cx="361" cy="185.5" r="1.8"/><circle cx="281.4" cy="186.7" r="1.8"/><circle cx="275.1" cy="187" r="1.8"/><circle cx="697.3" cy="187.5" r="1.8"/><circle cx="149.5" cy="185.7" r="1.8"/><circle cx="148" cy="183.6" r="1.8"/><circle cx="426.4" cy="182.1" r="1.8"/><circle cx="571.5" cy="188.1" r="1.8"/><circle cx="539.8" cy="185.4" r="1.8"/><circle cx="488.5" cy="186.5" r="1.8"/><circle cx="287.3" cy="187.3" r="1.8"/><circle cx="829" cy="184.8" r="1.8"/><circle cx="804.8" cy="181.1" r="1.8"/><circle cx="822.3" cy="179.1" r="1.8"/><circle cx="464.4" cy="182.9" r="1.8"/><circle cx="447.6" cy="187" r="1.8"/><circle cx="626.7" cy="186.4" r="1.8"/><circle cx="368.5" cy="182.7" r="1.8"/><circle cx="411.6" cy="183.7" r="1.8"/><circle cx="264.7" cy="186.2" r="1.8"/><circle cx="491.4" cy="185.4" r="1.8"/><circle cx="267.2" cy="185.9" r="1.8"/><circle cx="266.5" cy="182.6" r="1.8"/><circle cx="522.4" cy="187.6" r="1.8"/><circle cx="813" cy="184.4" r="1.8"/><circle cx="795.6" cy="185.7" r="1.8"/><circle cx="636.7" cy="188.5" r="1.8"/><circle cx="172.2" cy="181.5" r="1.8"/><circle cx="137.2" cy="186.3" r="1.8"/><circle cx="636.3" cy="187.8" r="1.8"/><circle cx="313.7" cy="183.6" r="1.8"/><circle cx="243.2" cy="185.2" r="1.8"/><circle cx="826" cy="181" r="1.8"/><circle cx="159.1" cy="181.2" r="1.8"/><circle cx="378.1" cy="188.2" r="1.8"/><circle cx="694.4" cy="186.8" r="1.8"/><circle cx="199.9" cy="180.9" r="1.8"/><circle cx="236.3" cy="186.3" r="1.8"/><circle cx="459.8" cy="189.4" r="1.8"/><circle cx="769.9" cy="190" r="1.8"/><circle cx="463.3" cy="188.1" r="1.8"/><circle cx="218.3" cy="181" r="1.8"/><circle cx="524.6" cy="186.1" r="1.8"/><circle cx="275.3" cy="182.5" r="1.8"/><circle cx="142.9" cy="186.7" r="1.8"/><circle cx="628" cy="190.2" r="1.8"/><circle cx="818.3" cy="182" r="1.8"/><circle cx="643.6" cy="186" r="1.8"/><circle cx="699.6" cy="189.8" r="1.8"/><circle cx="222.2" cy="180.3" r="1.8"/><circle cx="278.7" cy="185.1" r="1.8"/><circle cx="394.8" cy="181.4" r="1.8"/><circle cx="712.5" cy="189.5" r="1.8"/><circle cx="454.5" cy="182.1" r="1.8"/><circle cx="753.9" cy="187.8" r="1.8"/><circle cx="178" cy="182.4" r="1.8"/><circle cx="567.7" cy="189.3" r="1.8"/><circle cx="469.1" cy="186.8" r="1.8"/><circle cx="272.8" cy="190.4" r="1.8"/><circle cx="765.7" cy="194.4" r="1.8"/><circle cx="201.2" cy="192.4" r="1.8"/><circle cx="216.9" cy="189.8" r="1.8"/><circle cx="449.3" cy="193.9" r="1.8"/><circle cx="576" cy="196.2" r="1.8"/><circle cx="437.5" cy="190.6" r="1.8"/><circle cx="638" cy="191.9" r="1.8"/><circle cx="459.3" cy="192.5" r="1.8"/><circle cx="601.7" cy="196.4" r="1.8"/><circle cx="296.8" cy="193.6" r="1.8"/><circle cx="615.2" cy="194.1" r="1.8"/><circle cx="227.8" cy="198.6" r="1.8"/><circle cx="549.7" cy="191.3" r="1.8"/><circle cx="296" cy="204" r="1.8"/><circle cx="289" cy="191.4" r="1.8"/><circle cx="682.8" cy="198.9" r="1.8"/><circle cx="574.3" cy="196.7" r="1.8"/><circle cx="155" cy="188.9" r="1.8"/><circle cx="815.2" cy="193.8" r="1.8"/><circle cx="154.8" cy="188.7" r="1.8"/><circle cx="297.3" cy="200.1" r="1.8"/><circle cx="282.6" cy="193.8" r="1.8"/><circle cx="783" cy="196.7" r="1.8"/><circle cx="775.2" cy="193.8" r="1.8"/><circle cx="236" cy="189.1" r="1.8"/><circle cx="661" cy="192.3" r="1.8"/><circle cx="813.1" cy="192.3" r="1.8"/><circle cx="259.6" cy="195.8" r="1.8"/><circle cx="242.6" cy="191.9" r="1.8"/><circle cx="202.5" cy="195" r="1.8"/><circle cx="754.3" cy="202.4" r="1.8"/><circle cx="129.6" cy="195.9" r="1.8"/><circle cx="519.3" cy="197.8" r="1.8"/><circle cx="481.7" cy="194.5" r="1.8"/><circle cx="546.6" cy="197.5" r="1.8"/><circle cx="182.6" cy="188.9" r="1.8"/><circle cx="512" cy="192.2" r="1.8"/><circle cx="407.5" cy="190.2" r="1.8"/><circle cx="652.5" cy="191.9" r="1.8"/><circle cx="712.1" cy="198.8" r="1.8"/><circle cx="450.4" cy="191" r="1.8"/><circle cx="585.6" cy="192.2" r="1.8"/><circle cx="430" cy="190.8" r="1.8"/><circle cx="815.4" cy="190.5" r="1.8"/><circle cx="376.2" cy="190.3" r="1.8"/><circle cx="642" cy="199.3" r="1.8"/><circle cx="725.2" cy="192.7" r="1.8"/><circle cx="386.8" cy="191.5" r="1.8"/><circle cx="664.7" cy="192.5" r="1.8"/><circle cx="554.9" cy="204" r="1.8"/><circle cx="669.2" cy="191.9" r="1.8"/><circle cx="180.8" cy="189.1" r="1.8"/><circle cx="615.5" cy="195.2" r="1.8"/><circle cx="494.2" cy="193.2" r="1.8"/><circle cx="414.8" cy="194" r="1.8"/><circle cx="584.6" cy="201.2" r="1.8"/><circle cx="643.8" cy="198.1" r="1.8"/><circle cx="770.7" cy="199.8" r="1.8"/><circle cx="632.5" cy="191.8" r="1.8"/><circle cx="607.3" cy="199.1" r="1.8"/><circle cx="431.3" cy="198.7" r="1.8"/><circle cx="254.6" cy="200.6" r="1.8"/><circle cx="439" cy="195.3" r="1.8"/><circle cx="305.9" cy="190.9" r="1.8"/><circle cx="373.3" cy="191.5" r="1.8"/><circle cx="194.7" cy="191.1" r="1.8"/><circle cx="818.5" cy="191.5" r="1.8"/><circle cx="784.3" cy="198.4" r="1.8"/><circle cx="717.1" cy="204" r="1.8"/><circle cx="657.9" cy="193.1" r="1.8"/><circle cx="303.8" cy="191.6" r="1.8"/><circle cx="142.7" cy="189.5" r="1.8"/><circle cx="751.9" cy="202.6" r="1.8"/><circle cx="359.4" cy="195.7" r="1.8"/><circle cx="673.6" cy="200.7" r="1.8"/><circle cx="687.4" cy="195" r="1.8"/><circle cx="201.8" cy="195.8" r="1.8"/><circle cx="348.8" cy="193.7" r="1.8"/><circle cx="386.5" cy="193.1" r="1.8"/><circle cx="807.8" cy="188" r="1.8"/><circle cx="501.8" cy="195" r="1.8"/><circle cx="507" cy="201.9" r="1.8"/><circle cx="414.9" cy="200" r="1.8"/><circle cx="613.6" cy="204" r="1.8"/><circle cx="772.4" cy="259.7" r="1.9"/><circle cx="778.2" cy="256.6" r="1.9"/><circle cx="775.5" cy="267.9" r="1.9"/><circle cx="773.7" cy="275" r="1.9"/><circle cx="776.3" cy="271" r="1.9"/><circle cx="775" cy="282.9" r="1.9"/><circle cx="777.6" cy="281.6" r="1.9"/><circle cx="773.7" cy="284.2" r="1.9"/><circle cx="771" cy="288.2" r="1.9"/><circle cx="776.3" cy="289.5" r="1.9"/><circle cx="769.7" cy="293.4" r="1.9"/><circle cx="777.6" cy="292" r="1.9"/><circle cx="771" cy="302.6" r="1.9"/><circle cx="773.7" cy="304" r="1.9"/><circle cx="771" cy="309.2" r="1.9"/><circle cx="770.5" cy="311.8" r="1.9"/><circle cx="776.3" cy="316.3" r="1.9"/><circle cx="769" cy="319.2" r="1.9"/><circle cx="769" cy="325.8" r="1.9"/><circle cx="775" cy="325.5" r="1.9"/><circle cx="778.4" cy="325" r="1.9"/><circle cx="775" cy="332.4" r="1.9"/><circle cx="771.6" cy="334.2" r="1.9"/><circle cx="770.5" cy="338.2" r="1.9"/><circle cx="778.4" cy="340.3" r="1.9"/><circle cx="778.4" cy="353.4" r="1.9"/><circle cx="774.2" cy="391.3" r="1.9"/></g><g font-family="Liberation Sans" font-size="8.2" fill="#555"><text x="86" y="408.0" text-anchor="end">0</text><text x="86" y="361.2" text-anchor="end">5</text><text x="86" y="314.4" text-anchor="end">10</text><text x="86" y="267.6" text-anchor="end">15</text><text x="86" y="220.8" text-anchor="end">20</text><text x="86" y="174.0" text-anchor="end">25</text><text x="875.3" y="182.3">0</text><text x="875.3" y="213.6">−10</text><text x="875.3" y="244.9">−20</text><text x="875.3" y="276.2">−30</text><text x="875.3" y="307.5">−40</text><text x="875.3" y="338.9">−50</text><text x="875.3" y="370.2">−60</text><text x="875.3" y="401.5">−70</text><text x="127.2" y="414.8" text-anchor="middle">Apr 3</text><text x="268.4" y="414.8" text-anchor="middle">Apr 4</text><text x="409.6" y="414.8" text-anchor="middle">Apr 5</text><text x="550.8" y="414.8" text-anchor="middle">Apr 6</text><text x="692.0" y="414.8" text-anchor="middle">Apr 7</text><text x="833.2" y="414.8" text-anchor="middle">Apr 8</text><text x="127.2" y="424.8" text-anchor="middle">2023</text></g><rect x="899.5" y="170" width="7.6" height="7.6" fill="#3ab04a"/><rect x="899.5" y="182.6" width="7.6" height="7.4" fill="#1b1464"/><circle cx="903.3" cy="198.8" r="1.5" fill="#08a60c"/><path d="M893.6 211.2H913.5" stroke="#000" stroke-width="2"/><g font-family="Liberation Sans" font-size="8" fill="#555"><text x="916.6" y="177.2">cycleTime</text><text x="916.6" y="189.6">druck</text><text x="916.6" y="201.7">leck</text><text x="916.6" y="214.3">temperatur</text></g></svg>
<svg class="abs" style="left:0;top:440px" width="1000" height="131" viewBox="0 440 1000 131"><rect x="94" y="500" width="2.8" height="57" fill="#d78071"/><rect x="96.5" y="500" width="2.8" height="57" fill="#d77f71"/><rect x="99" y="500" width="1.8" height="57" fill="#e2a079"/><rect x="100.5" y="500" width="3.8" height="57" fill="#cf6867"/><rect x="104" y="500" width="1.8" height="57" fill="#e2a27a"/><rect x="105.5" y="500" width="1.1" height="57" fill="#d2716b"/><rect x="106.3" y="500" width="2.8" height="57" fill="#d5786e"/><rect x="108.8" y="500" width="1.3" height="57" fill="#d77f71"/><rect x="109.8" y="500" width="1.3" height="57" fill="#ebbc81"/><rect x="110.8" y="500" width="1.8" height="57" fill="#d67d70"/><rect x="112.3" y="500" width="2.3" height="57" fill="#d77f71"/><rect x="114.3" y="500" width="3.3" height="57" fill="#c64a58"/><rect x="117.3" y="500" width="1.1" height="57" fill="#d3736c"/><rect x="118.1" y="500" width="1.8" height="57" fill="#d4766d"/><rect x="119.6" y="500" width="1.3" height="57" fill="#d26f6a"/><rect x="120.6" y="500" width="1.8" height="57" fill="#cf6666"/><rect x="122.1" y="500" width="3.8" height="57" fill="#d3726b"/><rect x="125.6" y="500" width="1.8" height="57" fill="#d88372"/><rect x="127.1" y="500" width="1.1" height="57" fill="#c9545d"/><rect x="127.9" y="500" width="1.1" height="57" fill="#d98573"/><rect x="128.7" y="500" width="2.3" height="57" fill="#d4776d"/><rect x="130.7" y="500" width="1.8" height="57" fill="#d16d69"/><rect x="132.2" y="500" width="1.3" height="57" fill="#ce6566"/><rect x="133.2" y="500" width="2.3" height="57" fill="#d06967"/><rect x="135.2" y="500" width="1.8" height="57" fill="#ce6566"/><rect x="136.7" y="500" width="2.8" height="57" fill="#d06b68"/><rect x="139.2" y="500" width="3.3" height="57" fill="#e2a079"/><rect x="142.2" y="500" width="1.3" height="57" fill="#d2716b"/><rect x="143.2" y="500" width="2.3" height="57" fill="#d16c69"/><rect x="145.2" y="500" width="1.8" height="57" fill="#d98473"/><rect x="146.7" y="500" width="3.8" height="57" fill="#d78071"/><rect x="150.2" y="500" width="1.8" height="57" fill="#e8b47e"/><rect x="151.7" y="500" width="3.8" height="57" fill="#cf6867"/><rect x="155.2" y="500" width="1.3" height="57" fill="#c54958"/><rect x="156.2" y="500" width="3.8" height="57" fill="#d16e6a"/><rect x="159.7" y="500" width="1.3" height="57" fill="#de9476"/><rect x="160.7" y="500" width="1.8" height="57" fill="#edc483"/><rect x="162.2" y="500" width="3.8" height="57" fill="#d88372"/><rect x="165.7" y="500" width="2.8" height="57" fill="#d06968"/><rect x="168.2" y="500" width="2.3" height="57" fill="#dd9276"/><rect x="170.2" y="500" width="1.8" height="57" fill="#d16d69"/><rect x="171.7" y="500" width="1.8" height="57" fill="#e3a57a"/><rect x="173.2" y="500" width="3.3" height="57" fill="#c9545d"/><rect x="176.2" y="500" width="2.8" height="57" fill="#d3726b"/><rect x="178.7" y="500" width="1.3" height="57" fill="#e2a079"/><rect x="179.7" y="500" width="1.8" height="57" fill="#c8505b"/><rect x="181.2" y="500" width="1.8" height="57" fill="#d88172"/><rect x="182.7" y="500" width="2.8" height="57" fill="#d06b68"/><rect x="185.2" y="500" width="1.3" height="57" fill="#e19f79"/><rect x="186.2" y="500" width="3.8" height="57" fill="#d16e6a"/><rect x="189.7" y="500" width="1.8" height="57" fill="#cf6767"/><rect x="191.2" y="500" width="2.3" height="57" fill="#cf6766"/><rect x="193.2" y="500" width="1.3" height="57" fill="#d4766d"/><rect x="194.2" y="500" width="1.3" height="57" fill="#dd9276"/><rect x="195.2" y="500" width="2.8" height="57" fill="#d5796e"/><rect x="197.7" y="500" width="3.3" height="57" fill="#d06968"/><rect x="200.7" y="500" width="1.1" height="57" fill="#d3746c"/><rect x="201.5" y="500" width="2.3" height="57" fill="#d98472"/><rect x="203.5" y="500" width="1.1" height="57" fill="#cf6767"/><rect x="204.3" y="500" width="1.3" height="57" fill="#d26f6a"/><rect x="205.3" y="500" width="1.3" height="57" fill="#e2a27a"/><rect x="206.3" y="500" width="1.1" height="57" fill="#d67c6f"/><rect x="207.1" y="500" width="1.3" height="57" fill="#d88172"/><rect x="208.1" y="500" width="2.3" height="57" fill="#e19f79"/><rect x="210.1" y="500" width="1.3" height="57" fill="#d3726b"/><rect x="211.1" y="500" width="1.1" height="57" fill="#d4776d"/><rect x="211.9" y="500" width="3.8" height="57" fill="#d2716b"/><rect x="215.4" y="500" width="1.1" height="57" fill="#cf6767"/><rect x="216.2" y="500" width="1.3" height="57" fill="#d78071"/><rect x="217.2" y="500" width="2.3" height="57" fill="#d67c6f"/><rect x="219.2" y="500" width="3.8" height="57" fill="#d3736c"/><rect x="222.7" y="500" width="3.3" height="57" fill="#e5aa7c"/><rect x="225.7" y="500" width="1.1" height="57" fill="#cf6867"/><rect x="226.5" y="500" width="1.1" height="57" fill="#c8505b"/><rect x="227.3" y="500" width="2.8" height="57" fill="#d5796e"/><rect x="229.8" y="500" width="2.8" height="57" fill="#c44556"/><rect x="232.3" y="500" width="1.8" height="57" fill="#e3a47a"/><rect x="233.8" y="500" width="3.3" height="57" fill="#e7b07d"/><rect x="236.8" y="500" width="2.8" height="57" fill="#d16d69"/><rect x="239.3" y="500" width="2.3" height="57" fill="#d06b69"/><rect x="241.3" y="500" width="2.3" height="57" fill="#d67c70"/><rect x="243.3" y="500" width="1.8" height="57" fill="#d2716b"/><rect x="244.8" y="500" width="3.8" height="57" fill="#d16c69"/><rect x="248.3" y="500" width="1.3" height="57" fill="#d77f71"/><rect x="249.3" y="500" width="1.1" height="57" fill="#d88372"/><rect x="250.1" y="500" width="1.8" height="57" fill="#d06967"/><rect x="251.6" y="500" width="2.8" height="57" fill="#d16c69"/><rect x="254.1" y="500" width="2.3" height="57" fill="#d4756d"/><rect x="256.1" y="500" width="2.3" height="57" fill="#d77f71"/><rect x="258.1" y="500" width="3.8" height="57" fill="#cf6767"/><rect x="261.6" y="500" width="1.1" height="57" fill="#d5786e"/><rect x="262.4" y="500" width="1.8" height="57" fill="#d26f6a"/><rect x="263.9" y="500" width="3.8" height="57" fill="#eaba80"/><rect x="267.4" y="500" width="2.8" height="57" fill="#e5ab7c"/><rect x="269.9" y="500" width="1.8" height="57" fill="#c54757"/><rect x="271.4" y="500" width="1.1" height="57" fill="#d06967"/><rect x="272.2" y="500" width="1.3" height="57" fill="#d5796e"/><rect x="273.2" y="500" width="2.3" height="57" fill="#d57a6f"/><rect x="275.2" y="500" width="1.8" height="57" fill="#d16d69"/><rect x="276.7" y="500" width="1.1" height="57" fill="#d4766d"/><rect x="277.5" y="500" width="1.1" height="57" fill="#df9777"/><rect x="278.3" y="500" width="2.3" height="57" fill="#d88372"/><rect x="280.3" y="500" width="3.3" height="57" fill="#d67c70"/><rect x="283.3" y="500" width="2.3" height="57" fill="#d67b6f"/><rect x="285.3" y="500" width="1.8" height="57" fill="#e7b17d"/><rect x="286.8" y="500" width="2.3" height="57" fill="#e19e79"/><rect x="288.8" y="500" width="1.1" height="57" fill="#d4776d"/><rect x="289.6" y="500" width="3.3" height="57" fill="#d88272"/><rect x="292.6" y="500" width="2.8" height="57" fill="#d98573"/><rect x="295.1" y="500" width="1.3" height="57" fill="#d77e70"/><rect x="296.1" y="500" width="1.3" height="57" fill="#c9535d"/><rect x="297.1" y="500" width="1.3" height="57" fill="#d4766d"/><rect x="298.1" y="500" width="2.3" height="57" fill="#d67b6f"/><rect x="300.1" y="500" width="1.1" height="57" fill="#cf6867"/><rect x="300.9" y="500" width="2.8" height="57" fill="#d3726b"/><rect x="303.4" y="500" width="1.8" height="57" fill="#cf6666"/><rect x="304.9" y="500" width="1.3" height="57" fill="#cf6666"/><rect x="305.9" y="500" width="3.3" height="57" fill="#d67d70"/><rect x="308.9" y="500" width="1.3" height="57" fill="#d98673"/><rect x="309.9" y="500" width="3.3" height="57" fill="#d57a6f"/><rect x="312.9" y="500" width="2.8" height="57" fill="#d57a6f"/><rect x="315.4" y="500" width="1.8" height="57" fill="#d4766d"/><rect x="316.9" y="500" width="3.3" height="57" fill="#d4756d"/><rect x="319.9" y="500" width="3.3" height="57" fill="#c7505b"/><rect x="322.9" y="500" width="3.8" height="57" fill="#c8525d"/><rect x="326.4" y="500" width="3.3" height="57" fill="#d4776d"/><rect x="329.4" y="500" width="1.8" height="57" fill="#d06967"/><rect x="330.9" y="500" width="1.1" height="57" fill="#cf6666"/><rect x="331.7" y="500" width="1.1" height="57" fill="#d3726b"/><rect x="332.5" y="500" width="3.8" height="57" fill="#dc9075"/><rect x="336" y="500" width="1.3" height="57" fill="#f0cc86"/><rect x="337" y="500" width="2.3" height="57" fill="#d77e70"/><rect x="339" y="500" width="2.3" height="57" fill="#d3746c"/><rect x="341" y="500" width="1.3" height="57" fill="#d88172"/><rect x="342" y="500" width="2.8" height="57" fill="#cf6867"/><rect x="344.5" y="500" width="2.3" height="57" fill="#d88272"/><rect x="346.5" y="500" width="1.3" height="57" fill="#d98573"/><rect x="347.5" y="500" width="1.1" height="57" fill="#c54958"/><rect x="348.3" y="500" width="1.8" height="57" fill="#d2706b"/><rect x="349.8" y="500" width="3.8" height="57" fill="#d4756c"/><rect x="353.3" y="500" width="3.8" height="57" fill="#e2a079"/><rect x="356.8" y="500" width="1.8" height="57" fill="#d67b6f"/><rect x="358.3" y="500" width="2.3" height="57" fill="#f1d087"/><rect x="360.3" y="500" width="3.3" height="57" fill="#d4766d"/><rect x="363.3" y="500" width="3.3" height="57" fill="#d4756d"/><rect x="366.3" y="500" width="3.3" height="57" fill="#d78071"/><rect x="369.3" y="500" width="1.8" height="57" fill="#d5786e"/><rect x="370.8" y="500" width="2.3" height="57" fill="#d26f6a"/><rect x="372.8" y="500" width="2.3" height="57" fill="#d06b68"/><rect x="374.8" y="500" width="1.8" height="57" fill="#d06968"/><rect x="376.3" y="500" width="1.8" height="57" fill="#dc9075"/><rect x="377.8" y="500" width="2.3" height="57" fill="#e6ad7c"/><rect x="379.8" y="500" width="2.3" height="57" fill="#d67b6f"/><rect x="381.8" y="500" width="1.8" height="57" fill="#d57a6f"/><rect x="383.3" y="500" width="1.1" height="57" fill="#e2a37a"/><rect x="384.1" y="500" width="2.3" height="57" fill="#d98472"/><rect x="386.1" y="500" width="1.3" height="57" fill="#d5796e"/><rect x="387.1" y="500" width="2.3" height="57" fill="#d57a6f"/><rect x="389.1" y="500" width="1.8" height="57" fill="#d3746c"/><rect x="390.6" y="500" width="1.1" height="57" fill="#f0cc86"/><rect x="391.4" y="500" width="3.3" height="57" fill="#d3746c"/><rect x="394.4" y="500" width="1.8" height="57" fill="#de9476"/><rect x="395.9" y="500" width="1.3" height="57" fill="#d88272"/><rect x="396.9" y="500" width="1.3" height="57" fill="#d06968"/><rect x="397.9" y="500" width="2.8" height="57" fill="#dc9075"/><rect x="400.4" y="500" width="2.3" height="57" fill="#d4756d"/><rect x="402.4" y="500" width="2.3" height="57" fill="#c64b59"/><rect x="404.4" y="500" width="1.1" height="57" fill="#d06b68"/><rect x="405.2" y="500" width="2.8" height="57" fill="#d2716b"/><rect x="407.7" y="500" width="1.8" height="57" fill="#cf6867"/><rect x="409.2" y="500" width="1.1" height="57" fill="#cf6867"/><rect x="410" y="500" width="2.3" height="57" fill="#d06b68"/><rect x="412" y="500" width="3.8" height="57" fill="#d77e70"/><rect x="415.5" y="500" width="1.8" height="57" fill="#d06967"/><rect x="417" y="500" width="1.3" height="57" fill="#d3726b"/><rect x="418" y="500" width="2.3" height="57" fill="#d67b6f"/><rect x="420" y="500" width="2.3" height="57" fill="#d3726b"/><rect x="422" y="500" width="1.3" height="57" fill="#e09a78"/><rect x="423" y="500" width="2.8" height="57" fill="#e7b07d"/><rect x="425.5" y="500" width="3.8" height="57" fill="#ecc082"/><rect x="429" y="500" width="1.8" height="57" fill="#d5796e"/><rect x="430.5" y="500" width="3.8" height="57" fill="#dc8f75"/><rect x="434" y="500" width="3.3" height="57" fill="#d5796e"/><rect x="437" y="500" width="1.3" height="57" fill="#d98573"/><rect x="438" y="500" width="1.1" height="57" fill="#dd9075"/><rect x="438.8" y="500" width="1.8" height="57" fill="#c64b59"/><rect x="440.3" y="500" width="1.1" height="57" fill="#d5796e"/><rect x="441.1" y="500" width="1.1" height="57" fill="#de9677"/><rect x="441.9" y="500" width="2.3" height="57" fill="#d4756d"/><rect x="443.9" y="500" width="3.3" height="57" fill="#d98673"/><rect x="446.9" y="500" width="2.8" height="57" fill="#cf6767"/><rect x="449.4" y="500" width="3.8" height="57" fill="#d88372"/><rect x="452.9" y="500" width="2.3" height="57" fill="#d06a68"/><rect x="454.9" y="500" width="2.8" height="57" fill="#d77f71"/><rect x="457.4" y="500" width="3.3" height="57" fill="#cf6766"/><rect x="460.4" y="500" width="2.8" height="57" fill="#d4756d"/><rect x="462.9" y="500" width="3.8" height="57" fill="#d4756d"/><rect x="466.4" y="500" width="2.8" height="57" fill="#d4766d"/><rect x="468.9" y="500" width="1.8" height="57" fill="#d67c70"/><rect x="470.4" y="500" width="1.1" height="57" fill="#ebbf81"/><rect x="471.2" y="500" width="1.1" height="57" fill="#d3726b"/><rect x="472" y="500" width="2.3" height="57" fill="#ecc282"/><rect x="474" y="500" width="2.3" height="57" fill="#f6e08c"/><rect x="476" y="500" width="2.3" height="57" fill="#e7b07d"/><rect x="478" y="500" width="2.3" height="57" fill="#d16d69"/><rect x="480" y="500" width="1.8" height="57" fill="#e9b87f"/><rect x="481.5" y="500" width="2.8" height="57" fill="#e7b27e"/><rect x="484" y="500" width="1.8" height="57" fill="#d06967"/><rect x="485.5" y="500" width="3.8" height="57" fill="#d06967"/><rect x="489" y="500" width="1.1" height="57" fill="#d06a68"/><rect x="489.8" y="500" width="2.3" height="57" fill="#d57a6f"/><rect x="491.8" y="500" width="2.8" height="57" fill="#d5796e"/><rect x="494.3" y="500" width="2.3" height="57" fill="#d67c70"/><rect x="496.3" y="500" width="1.3" height="57" fill="#d67c6f"/><rect x="497.3" y="500" width="1.8" height="57" fill="#d4756c"/><rect x="498.8" y="500" width="1.8" height="57" fill="#d5786e"/><rect x="500.3" y="500" width="2.3" height="57" fill="#d5786e"/><rect x="502.3" y="500" width="3.8" height="57" fill="#d06b68"/><rect x="505.8" y="500" width="1.8" height="57" fill="#d06b68"/><rect x="507.3" y="500" width="1.8" height="57" fill="#d5796e"/><rect x="508.8" y="500" width="1.8" height="57" fill="#cf6666"/><rect x="510.3" y="500" width="1.1" height="57" fill="#ecbf82"/><rect x="511.1" y="500" width="1.1" height="57" fill="#cf6867"/><rect x="511.9" y="500" width="3.3" height="57" fill="#d67c70"/><rect x="514.9" y="500" width="1.3" height="57" fill="#d5796e"/><rect x="515.9" y="500" width="2.3" height="57" fill="#d2706b"/><rect x="517.9" y="500" width="2.3" height="57" fill="#d67c70"/><rect x="519.9" y="500" width="1.3" height="57" fill="#d3736c"/><rect x="520.9" y="500" width="3.8" height="57" fill="#d67d70"/><rect x="524.4" y="500" width="2.8" height="57" fill="#d16d69"/><rect x="526.9" y="500" width="1.3" height="57" fill="#d5796e"/><rect x="527.9" y="500" width="3.8" height="57" fill="#d4766d"/><rect x="531.4" y="500" width="1.3" height="57" fill="#d2716b"/><rect x="532.4" y="500" width="1.3" height="57" fill="#d26f6a"/><rect x="533.4" y="500" width="3.3" height="57" fill="#e2a37a"/><rect x="536.4" y="500" width="2.8" height="57" fill="#d3736c"/><rect x="538.9" y="500" width="1.1" height="57" fill="#de9576"/><rect x="539.7" y="500" width="3.8" height="57" fill="#df9877"/><rect x="543.2" y="500" width="2.3" height="57" fill="#d06a68"/><rect x="545.2" y="500" width="2.3" height="57" fill="#d26f6a"/><rect x="547.2" y="500" width="1.3" height="57" fill="#d3736c"/><rect x="548.2" y="500" width="3.8" height="57" fill="#d88272"/><rect x="551.7" y="500" width="1.8" height="57" fill="#d77e70"/><rect x="553.2" y="500" width="1.8" height="57" fill="#d16c69"/><rect x="554.7" y="500" width="3.3" height="57" fill="#c64b59"/><rect x="557.7" y="500" width="2.3" height="57" fill="#f1d287"/><rect x="559.7" y="500" width="2.6" height="57" fill="#d06b68"/><defs><linearGradient id="cb" x1="0" y1="0" x2="0" y2="1"><stop offset="0" stop-color="#c44556"/><stop offset="1" stop-color="#d98574"/></linearGradient></defs><rect x="571.3" y="505.8" width="15.4" height="3.4" rx="1.7" fill="#c63e4e"/><rect x="573.4" y="510.2" width="11.6" height="47" fill="url(#cb)" stroke="#c94a58" stroke-width="0.8"/><text x="563.2" y="510.2" text-anchor="end" font-family="Liberation Sans" font-size="8.3" fill="#333">24</text></svg>
<svg class="abs" style="left:626px;top:453px" width="353" height="104" viewBox="626 453 353 104"><path d="M735.5 504.5V508M783.5 504.5V508M832 504.5V508M880 504.5V508" stroke="#e6e6e6" stroke-width="1"/><path d="M675.5 513.7H684M678.5 539.3H682" stroke="#777" stroke-width="1" stroke-dasharray="2.5,1.5"/><path d="M914 513.6H921.5" stroke="#999" stroke-width="1.3"/><path d="M914 539.5H921.5" stroke="#eee" stroke-width="1"/><path d="M714 515.6Q724 513.2 745 513L838 512.9V518L745 518.6Q724 518.4 714 516z" fill="#0b5a0b"/><g fill="#2b7a2b" fill-opacity="0.8"><rect x="734.7" y="516.2" width="0.9" height="0.9"/><rect x="741.9" y="512.3" width="0.9" height="0.9"/><rect x="723.6" y="517.1" width="0.9" height="0.9"/><rect x="691.7" y="514.6" width="0.9" height="0.9"/><rect x="714.9" y="513.7" width="0.9" height="0.9"/><rect x="713.7" y="514.8" width="0.9" height="0.9"/><rect x="741.7" y="515.4" width="0.9" height="0.9"/><rect x="710.6" y="514.5" width="0.9" height="0.9"/><rect x="710.1" y="517.9" width="0.9" height="0.9"/><rect x="713.6" y="515.3" width="0.9" height="0.9"/><rect x="703.1" y="514.5" width="0.9" height="0.9"/><rect x="732.1" y="518.5" width="0.9" height="0.9"/><rect x="742.6" y="514.1" width="0.9" height="0.9"/><rect x="694.5" y="512.1" width="0.9" height="0.9"/><rect x="711.6" y="515.6" width="0.9" height="0.9"/><rect x="729.1" y="515.7" width="0.9" height="0.9"/><rect x="732.1" y="514.7" width="0.9" height="0.9"/><rect x="724.2" y="516.3" width="0.9" height="0.9"/><rect x="724.2" y="515.2" width="0.9" height="0.9"/><rect x="690.3" y="514.9" width="0.9" height="0.9"/><rect x="738.8" y="517.6" width="0.9" height="0.9"/><rect x="728.1" y="515.6" width="0.9" height="0.9"/><rect x="706.9" y="516.7" width="0.9" height="0.9"/><rect x="735.2" y="518.2" width="0.9" height="0.9"/><rect x="704.1" y="514.6" width="0.9" height="0.9"/><rect x="736" y="516.3" width="0.9" height="0.9"/><rect x="734.9" y="516.1" width="0.9" height="0.9"/><rect x="742.8" y="512.8" width="0.9" height="0.9"/><rect x="718.6" y="513.1" width="0.9" height="0.9"/><rect x="742" y="513.4" width="0.9" height="0.9"/><rect x="717.5" y="515" width="0.9" height="0.9"/><rect x="711" y="516" width="0.9" height="0.9"/><rect x="744.9" y="515.5" width="0.9" height="0.9"/><rect x="698" y="515.6" width="0.9" height="0.9"/><rect x="714.5" y="513.3" width="0.9" height="0.9"/><rect x="721.9" y="513.9" width="0.9" height="0.9"/><rect x="741.6" y="516.8" width="0.9" height="0.9"/><rect x="710.2" y="515.6" width="0.9" height="0.9"/><rect x="743" y="513.7" width="0.9" height="0.9"/><rect x="722.4" y="513.6" width="0.9" height="0.9"/><rect x="738.8" y="514.9" width="0.9" height="0.9"/><rect x="702.8" y="516.7" width="0.9" height="0.9"/><rect x="696.8" y="513.2" width="0.9" height="0.9"/><rect x="716.6" y="515.5" width="0.9" height="0.9"/><rect x="710.9" y="512.5" width="0.9" height="0.9"/><rect x="699.4" y="518" width="0.9" height="0.9"/><rect x="718.5" y="516.2" width="0.9" height="0.9"/><rect x="739.7" y="515.9" width="0.9" height="0.9"/><rect x="736.4" y="515.6" width="0.9" height="0.9"/><rect x="735.4" y="513.3" width="0.9" height="0.9"/><rect x="733.2" y="515" width="0.9" height="0.9"/><rect x="732.6" y="516.8" width="0.9" height="0.9"/><rect x="742.8" y="514.3" width="0.9" height="0.9"/><rect x="726.9" y="513.9" width="0.9" height="0.9"/><rect x="731.9" y="513" width="0.9" height="0.9"/><rect x="736.9" y="515.9" width="0.9" height="0.9"/><rect x="730.8" y="515.1" width="0.9" height="0.9"/><rect x="738.7" y="512.9" width="0.9" height="0.9"/><rect x="700.3" y="518.5" width="0.9" height="0.9"/><rect x="726.2" y="514.8" width="0.9" height="0.9"/><rect x="861.9" y="517.6" width="0.9" height="0.9"/><rect x="864.3" y="514.3" width="0.9" height="0.9"/><rect x="852.3" y="512.6" width="0.9" height="0.9"/><rect x="839.9" y="514" width="0.9" height="0.9"/><rect x="844.3" y="512.9" width="0.9" height="0.9"/><rect x="851.2" y="513.6" width="0.9" height="0.9"/><rect x="868.8" y="513.1" width="0.9" height="0.9"/><rect x="864" y="513.1" width="0.9" height="0.9"/><rect x="852.5" y="515.2" width="0.9" height="0.9"/><rect x="871.8" y="515.8" width="0.9" height="0.9"/><rect x="845.4" y="517.4" width="0.9" height="0.9"/><rect x="843" y="514.7" width="0.9" height="0.9"/><rect x="855.6" y="515.2" width="0.9" height="0.9"/><rect x="850.6" y="515.3" width="0.9" height="0.9"/><rect x="844.5" y="515.9" width="0.9" height="0.9"/><rect x="840.3" y="515.4" width="0.9" height="0.9"/><rect x="861.9" y="515.3" width="0.9" height="0.9"/><rect x="863.5" y="513.6" width="0.9" height="0.9"/><rect x="842.1" y="518.4" width="0.9" height="0.9"/><rect x="863.5" y="515" width="0.9" height="0.9"/><rect x="842.6" y="516.6" width="0.9" height="0.9"/><rect x="873.4" y="517" width="0.9" height="0.9"/><rect x="842.8" y="515.3" width="0.9" height="0.9"/><rect x="846.4" y="514.5" width="0.9" height="0.9"/><rect x="859.9" y="514.6" width="0.9" height="0.9"/><rect x="893.1" y="513" width="0.9" height="0.9"/><rect x="848.9" y="513.5" width="0.9" height="0.9"/><rect x="851.8" y="512.9" width="0.9" height="0.9"/><rect x="847.4" y="515.6" width="0.9" height="0.9"/><rect x="864.5" y="513.8" width="0.9" height="0.9"/><rect x="901.2" y="513.9" width="0.9" height="0.9"/><rect x="856" y="514.1" width="0.9" height="0.9"/><rect x="838.9" y="515" width="0.9" height="0.9"/><rect x="863.1" y="516.3" width="0.9" height="0.9"/><rect x="848.3" y="514.4" width="0.9" height="0.9"/><rect x="874.2" y="512.6" width="0.9" height="0.9"/><rect x="856.9" y="516.2" width="0.9" height="0.9"/><rect x="841.1" y="516.3" width="0.9" height="0.9"/><rect x="862.1" y="514.7" width="0.9" height="0.9"/><rect x="891.7" y="514.1" width="0.9" height="0.9"/><rect x="854" y="514.3" width="0.9" height="0.9"/><rect x="867.1" y="514.8" width="0.9" height="0.9"/><rect x="856.9" y="515.7" width="0.9" height="0.9"/><rect x="866.9" y="514.8" width="0.9" height="0.9"/><rect x="844.5" y="516.8" width="0.9" height="0.9"/><rect x="863.1" y="516.5" width="0.9" height="0.9"/><rect x="857.5" y="515.5" width="0.9" height="0.9"/><rect x="847.3" y="512.1" width="0.9" height="0.9"/><rect x="868.7" y="515.2" width="0.9" height="0.9"/><rect x="846.7" y="518.7" width="0.9" height="0.9"/><rect x="841.7" y="513.8" width="0.9" height="0.9"/><rect x="839.6" y="515.9" width="0.9" height="0.9"/><rect x="858.8" y="514.9" width="0.9" height="0.9"/><rect x="860.1" y="513.9" width="0.9" height="0.9"/><rect x="858.9" y="513.3" width="0.9" height="0.9"/><rect x="838.5" y="514.2" width="0.9" height="0.9"/><rect x="839.4" y="513.6" width="0.9" height="0.9"/><rect x="860.1" y="514.7" width="0.9" height="0.9"/><rect x="846.9" y="516.9" width="0.9" height="0.9"/><rect x="861.1" y="515.3" width="0.9" height="0.9"/><rect x="839" y="512.9" width="0.9" height="0.9"/><rect x="856.6" y="515.3" width="0.9" height="0.9"/><rect x="891.6" y="516" width="0.9" height="0.9"/><rect x="861.9" y="513.7" width="0.9" height="0.9"/><rect x="881.2" y="515.3" width="0.9" height="0.9"/><rect x="867.4" y="515.9" width="0.9" height="0.9"/><rect x="847.2" y="512.8" width="0.9" height="0.9"/><rect x="892.7" y="515.4" width="0.9" height="0.9"/><rect x="856.8" y="516.1" width="0.9" height="0.9"/><rect x="847.9" y="514.2" width="0.9" height="0.9"/><rect x="851.5" y="517.9" width="0.9" height="0.9"/><rect x="881.5" y="516.2" width="0.9" height="0.9"/><rect x="847.1" y="513.4" width="0.9" height="0.9"/><rect x="847.9" y="517.7" width="0.9" height="0.9"/><rect x="849.7" y="514.5" width="0.9" height="0.9"/><rect x="869.3" y="515.3" width="0.9" height="0.9"/><rect x="860.4" y="515" width="0.9" height="0.9"/><rect x="856.9" y="516.7" width="0.9" height="0.9"/><rect x="841.6" y="514.4" width="0.9" height="0.9"/><rect x="843.8" y="517.9" width="0.9" height="0.9"/><rect x="847.6" y="512.7" width="0.9" height="0.9"/><rect x="877.5" y="515.4" width="0.9" height="0.9"/><rect x="849.9" y="514.8" width="0.9" height="0.9"/><rect x="845.5" y="515.6" width="0.9" height="0.9"/><rect x="852.7" y="512.6" width="0.9" height="0.9"/><rect x="886.9" y="514.8" width="0.9" height="0.9"/><rect x="851.1" y="514.1" width="0.9" height="0.9"/><rect x="891.9" y="516.3" width="0.9" height="0.9"/><rect x="865.7" y="514.2" width="0.9" height="0.9"/><rect x="845.6" y="514.7" width="0.9" height="0.9"/><rect x="843.2" y="516.2" width="0.9" height="0.9"/><rect x="853.3" y="515.5" width="0.9" height="0.9"/><rect x="841.8" y="512.7" width="0.9" height="0.9"/><rect x="856.8" y="515.6" width="0.9" height="0.9"/><rect x="847.3" y="513.7" width="0.9" height="0.9"/><rect x="847" y="513.5" width="0.9" height="0.9"/><rect x="855.1" y="516.4" width="0.9" height="0.9"/><rect x="847.1" y="517.3" width="0.9" height="0.9"/><rect x="851.3" y="516.3" width="0.9" height="0.9"/><rect x="866.7" y="511.5" width="0.9" height="0.9"/><rect x="840" y="512.9" width="0.9" height="0.9"/><rect x="849.8" y="514.8" width="0.9" height="0.9"/><rect x="869.6" y="514.9" width="0.9" height="0.9"/><rect x="879.6" y="514.1" width="0.9" height="0.9"/><rect x="839.4" y="515.2" width="0.9" height="0.9"/><rect x="862" y="514.9" width="0.9" height="0.9"/><rect x="853.7" y="514.5" width="0.9" height="0.9"/><rect x="873.5" y="517" width="0.9" height="0.9"/><rect x="856.9" y="515.7" width="0.9" height="0.9"/><rect x="845" y="514" width="0.9" height="0.9"/><rect x="848.3" y="516.3" width="0.9" height="0.9"/><rect x="858" y="513.7" width="0.9" height="0.9"/><rect x="878" y="517.5" width="0.9" height="0.9"/><rect x="845.4" y="515.9" width="0.9" height="0.9"/><rect x="842.7" y="517.3" width="0.9" height="0.9"/><rect x="849.2" y="515.1" width="0.9" height="0.9"/><rect x="850.2" y="517.3" width="0.9" height="0.9"/><rect x="844.3" y="515.4" width="0.9" height="0.9"/><rect x="850.4" y="513.9" width="0.9" height="0.9"/><rect x="854.5" y="515.1" width="0.9" height="0.9"/><rect x="860.4" y="513.9" width="0.9" height="0.9"/><rect x="853.2" y="514.3" width="0.9" height="0.9"/><rect x="846.9" y="516.1" width="0.9" height="0.9"/><rect x="869.5" y="515.6" width="0.9" height="0.9"/><rect x="863.1" y="516.2" width="0.9" height="0.9"/><rect x="862.2" y="513.3" width="0.9" height="0.9"/><rect x="855.9" y="514.9" width="0.9" height="0.9"/><rect x="863" y="515.3" width="0.9" height="0.9"/><rect x="841.7" y="515.1" width="0.9" height="0.9"/><rect x="828.9" y="519.1" width="0.9" height="0.9"/><rect x="788.1" y="518.5" width="0.9" height="0.9"/><rect x="787" y="518.6" width="0.9" height="0.9"/><rect x="829" y="520.2" width="0.9" height="0.9"/><rect x="786.6" y="520.1" width="0.9" height="0.9"/><rect x="750" y="519.2" width="0.9" height="0.9"/><rect x="777.5" y="519.6" width="0.9" height="0.9"/><rect x="778.6" y="519.4" width="0.9" height="0.9"/><rect x="765.4" y="519.4" width="0.9" height="0.9"/><rect x="767.7" y="519.5" width="0.9" height="0.9"/><rect x="763.5" y="520" width="0.9" height="0.9"/><rect x="788.2" y="523.4" width="0.9" height="0.9"/><rect x="776.9" y="519.5" width="0.9" height="0.9"/><rect x="833.8" y="519.8" width="0.9" height="0.9"/><rect x="787.2" y="521.5" width="0.9" height="0.9"/><rect x="834.5" y="520.9" width="0.9" height="0.9"/><rect x="769.1" y="520.7" width="0.9" height="0.9"/><rect x="807.4" y="518.7" width="0.9" height="0.9"/><rect x="760.1" y="519.8" width="0.9" height="0.9"/><rect x="742.5" y="518.6" width="0.9" height="0.9"/><rect x="780.1" y="519.4" width="0.9" height="0.9"/><rect x="837.4" y="519.8" width="0.9" height="0.9"/><rect x="786.8" y="519.9" width="0.9" height="0.9"/><rect x="768.3" y="518.9" width="0.9" height="0.9"/><rect x="756.3" y="522" width="0.9" height="0.9"/><rect x="764.1" y="521" width="0.9" height="0.9"/><rect x="804.6" y="523.1" width="0.9" height="0.9"/><rect x="783.1" y="518.7" width="0.9" height="0.9"/><rect x="746.1" y="518.5" width="0.9" height="0.9"/><rect x="817.9" y="519.1" width="0.9" height="0.9"/><rect x="794.8" y="518.9" width="0.9" height="0.9"/><rect x="839" y="520.5" width="0.9" height="0.9"/><rect x="749.4" y="518.7" width="0.9" height="0.9"/><rect x="747.1" y="520.6" width="0.9" height="0.9"/><rect x="833.6" y="520" width="0.9" height="0.9"/><rect x="745.4" y="518.5" width="0.9" height="0.9"/><rect x="779.7" y="519.2" width="0.9" height="0.9"/><rect x="746" y="518.6" width="0.9" height="0.9"/><rect x="770.6" y="520.7" width="0.9" height="0.9"/><rect x="745.1" y="524.2" width="0.9" height="0.9"/><rect x="757.9" y="519.9" width="0.9" height="0.9"/><rect x="790.9" y="520.7" width="0.9" height="0.9"/><rect x="748.4" y="520.1" width="0.9" height="0.9"/><rect x="771.4" y="520.6" width="0.9" height="0.9"/><rect x="832.1" y="520.2" width="0.9" height="0.9"/><rect x="799.8" y="519.5" width="0.9" height="0.9"/><rect x="741.7" y="519.7" width="0.9" height="0.9"/><rect x="794" y="521.4" width="0.9" height="0.9"/><rect x="777.7" y="518.7" width="0.9" height="0.9"/><rect x="802.5" y="519.2" width="0.9" height="0.9"/><rect x="770.8" y="523.3" width="0.9" height="0.9"/><rect x="784.9" y="519.2" width="0.9" height="0.9"/><rect x="751.6" y="519.9" width="0.9" height="0.9"/><rect x="771.2" y="521.7" width="0.9" height="0.9"/><rect x="821.9" y="520.5" width="0.9" height="0.9"/><rect x="771.3" y="519.1" width="0.9" height="0.9"/><rect x="764.5" y="519.2" width="0.9" height="0.9"/><rect x="748.4" y="521.1" width="0.9" height="0.9"/><rect x="764.5" y="519.8" width="0.9" height="0.9"/><rect x="746.1" y="518.7" width="0.9" height="0.9"/><rect x="760" y="519.2" width="0.9" height="0.9"/><rect x="768.6" y="519.2" width="0.9" height="0.9"/><rect x="782.1" y="519.2" width="0.9" height="0.9"/><rect x="771.4" y="518.5" width="0.9" height="0.9"/><rect x="829.6" y="521.3" width="0.9" height="0.9"/><rect x="805.4" y="518.7" width="0.9" height="0.9"/><rect x="784.2" y="521.4" width="0.9" height="0.9"/><rect x="821.7" y="521.6" width="0.9" height="0.9"/><rect x="812.8" y="523" width="0.9" height="0.9"/><rect x="810.1" y="518.9" width="0.9" height="0.9"/><rect x="778.2" y="522.5" width="0.9" height="0.9"/><rect x="753" y="519.7" width="0.9" height="0.9"/><rect x="766.3" y="519" width="0.9" height="0.9"/><rect x="807.6" y="518.7" width="0.9" height="0.9"/><rect x="816.4" y="519.3" width="0.9" height="0.9"/><rect x="795.7" y="519.2" width="0.9" height="0.9"/><rect x="753" y="518.6" width="0.9" height="0.9"/><rect x="775.7" y="521.9" width="0.9" height="0.9"/><rect x="801.2" y="522.6" width="0.9" height="0.9"/><rect x="763.1" y="520.4" width="0.9" height="0.9"/><rect x="773" y="519.4" width="0.9" height="0.9"/><rect x="741.2" y="522.1" width="0.9" height="0.9"/><rect x="812.7" y="520.6" width="0.9" height="0.9"/><rect x="749.5" y="519.8" width="0.9" height="0.9"/><rect x="810.9" y="518.8" width="0.9" height="0.9"/><rect x="784.6" y="522.1" width="0.9" height="0.9"/><rect x="751.8" y="520" width="0.9" height="0.9"/><rect x="771.7" y="520.6" width="0.9" height="0.9"/><rect x="783.4" y="519.7" width="0.9" height="0.9"/><rect x="784.1" y="519.1" width="0.9" height="0.9"/><rect x="793.3" y="523.6" width="0.9" height="0.9"/><rect x="837" y="519.3" width="0.9" height="0.9"/><rect x="821.4" y="519.1" width="0.9" height="0.9"/><rect x="781.9" y="524.3" width="0.9" height="0.9"/><rect x="743.3" y="520.5" width="0.9" height="0.9"/><rect x="797.7" y="523" width="0.9" height="0.9"/><rect x="779.3" y="519" width="0.9" height="0.9"/><rect x="761.6" y="518.7" width="0.9" height="0.9"/><rect x="796.2" y="520" width="0.9" height="0.9"/><rect x="775.7" y="518.5" width="0.9" height="0.9"/><rect x="775.2" y="520.1" width="0.9" height="0.9"/><rect x="764.8" y="522.7" width="0.9" height="0.9"/><rect x="825" y="519" width="0.9" height="0.9"/><rect x="801.8" y="519.5" width="0.9" height="0.9"/><rect x="823.2" y="519.2" width="0.9" height="0.9"/><rect x="789" y="519.8" width="0.9" height="0.9"/><rect x="749.9" y="518.8" width="0.9" height="0.9"/><rect x="811.8" y="519.7" width="0.9" height="0.9"/><rect x="819.7" y="519.4" width="0.9" height="0.9"/><rect x="772.4" y="520.3" width="0.9" height="0.9"/><rect x="822" y="549" width="0.9" height="0.9"/><rect x="808" y="555" width="0.9" height="0.9"/><rect x="852" y="546" width="0.9" height="0.9"/><rect x="868" y="547" width="0.9" height="0.9"/><rect x="775" y="553" width="0.9" height="0.9"/><rect x="720" y="557" width="0.9" height="0.9"/><rect x="735" y="557" width="0.9" height="0.9"/><rect x="897" y="551" width="0.9" height="0.9"/></g><g font-family="Liberation Sans" font-size="8" fill="#555"><text x="673" y="516.5" text-anchor="end">0</text><text x="676" y="542.3" text-anchor="end">−20</text><text transform="translate(656,558) rotate(-90)" x="0" y="0" font-size="10">ck</text></g></svg>
<div class="abs" style="left:979px;top:108px;width:14px;height:3px;background:#dcdcdc"></div>
<div class="abs" style="left:979px;top:111px;width:15px;height:446px;background:#f1f1f1;border-left:3px solid #dadada"></div>
<div class="abs" style="left:29px;top:557px;width:950px;height:1px;background:#e6e6e6"></div>
<div class="abs" style="left:983px;top:120px;width:9px;height:175px;background:#c1c1c1"></div>
<div class="abs" style="left:984px;top:114px;width:0;height:0;border-bottom:4px solid #a3a3a3;border-left:3.5px solid transparent;border-right:3.5px solid transparent"></div>
<div class="abs" style="left:984px;top:549px;width:0;height:0;border-top:4px solid #505050;border-left:3.5px solid transparent;border-right:3.5px solid transparent"></div>

<svg class="abs" style="left:0;top:0" width="1000" height="571"><path d="M0 0H3A3 3 0 0 0 0 3z M1000 0H997A3 3 0 0 1 1000 3z M0 571H3A3 3 0 0 1 0 568z M1000 571H997A3 3 0 0 0 1000 568z" fill="#000"/></svg></body></html>
